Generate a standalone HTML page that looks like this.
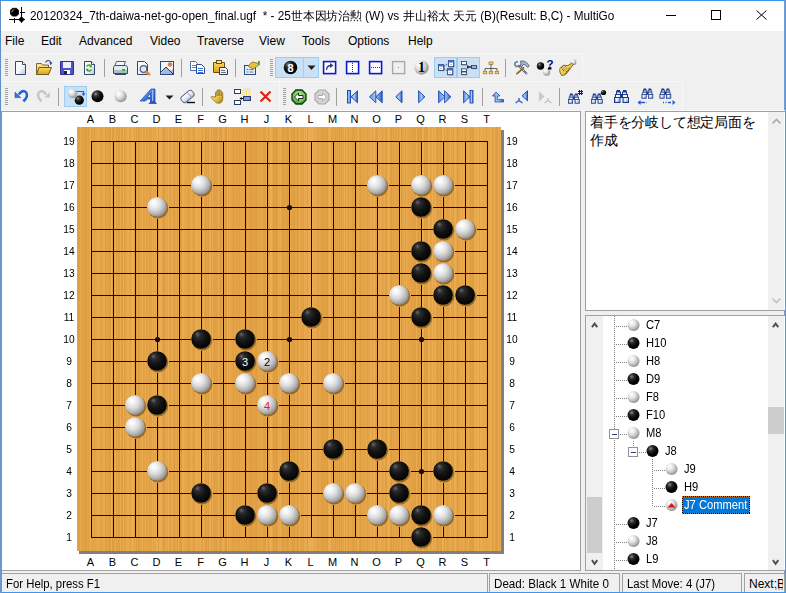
<!DOCTYPE html><html><head><meta charset="utf-8"><style>
*{margin:0;padding:0;box-sizing:border-box}
html,body{width:786px;height:593px;overflow:hidden;background:#f0f0f0;font-family:"Liberation Sans",sans-serif;color:#000}
.a{position:absolute}
.t{position:absolute;white-space:nowrap;line-height:1}
svg{position:absolute;overflow:visible}
</style></head><body>

<div class="a" style="left:0;top:0;width:786px;height:31px;background:#fff"></div>
<div class="a" style="left:0;top:0;width:786px;height:1px;background:#3a95ee"></div>
<div class="a" style="left:0;top:0;width:1px;height:593px;background:#5f8fc8"></div>
<div class="a" style="left:785px;top:0;width:1px;height:593px;background:#6394cc"></div>
<div class="a" style="left:784px;top:1px;width:1px;height:592px;background:#72a0d6"></div>
<div class="a" style="left:0;top:592px;width:786px;height:1px;background:#3a95ee"></div>
<svg style="left:9px;top:7px" width="17" height="17" viewBox="0 0 17 17">
<path d="M3.5 1.3h4l2 2v3.8l-2 2h-4l-2-2v-3.8z" fill="#000" stroke="#000" stroke-width="0.8"/>
<path d="M2.5 5l2.8-2.8" stroke="#fff" stroke-width="1" stroke-dasharray="1.2 0.5"/>
<path d="M12.5 0v16M11 5.5h5M0 12.5h16M5.5 11v5" stroke="#000" stroke-width="1"/>
<path d="M12.5 9.2l3.3 3.3-3.3 3.3-3.3-3.3z" fill="#000"/>
</svg>
<div class="t" style="left:30px;top:10px;font-size:12px;color:#000;transform:scaleX(0.985);transform-origin:0 0">20120324_7th-daiwa-net-go-open_final.ugf&nbsp; * - 25世本因坊治勲 (W) vs</div>
<div class="t" style="left:403px;top:10px;font-size:12px;color:#000;transform:scaleX(0.981);transform-origin:0 0">井山裕太 天元 (B)(Result: B,C) - MultiGo</div>
<svg style="left:666px;top:10px" width="102" height="10" viewBox="0 0 102 10">
<path d="M0 5.5h10" stroke="#000" stroke-width="1"/>
<rect x="45.5" y="0.5" width="9" height="9" fill="none" stroke="#000" stroke-width="1"/>
<path d="M90.5 0.5l10 9M100.5 0.5l-10 9" stroke="#000" stroke-width="1"/>
</svg>
<div class="t" style="left:5px;top:35px;font-size:12px">File</div>
<div class="t" style="left:41px;top:35px;font-size:12px">Edit</div>
<div class="t" style="left:79px;top:35px;font-size:12px">Advanced</div>
<div class="t" style="left:150px;top:35px;font-size:12px">Video</div>
<div class="t" style="left:197px;top:35px;font-size:12px">Traverse</div>
<div class="t" style="left:259px;top:35px;font-size:12px">View</div>
<div class="t" style="left:302px;top:35px;font-size:12px">Tools</div>
<div class="t" style="left:348px;top:35px;font-size:12px">Options</div>
<div class="t" style="left:408px;top:35px;font-size:12px">Help</div>
<div class="a" style="left:1px;top:53px;width:582px;height:1px;background:#f8f8f8"></div>
<div class="a" style="left:1px;top:81px;width:682px;height:1px;background:#f8f8f8"></div>
<div class="a" style="left:266px;top:53px;width:1px;height:28px;background:#f8f8f8"></div>
<div class="a" style="left:279px;top:81px;width:1px;height:29px;background:#f8f8f8"></div>
<div class="a" style="left:582px;top:53px;width:1px;height:28px;background:#f8f8f8"></div>
<div class="a" style="left:682px;top:81px;width:1px;height:29px;background:#f8f8f8"></div>
<div class="a" style="left:1px;top:110px;width:784px;height:1px;background:#f8f8f8"></div>
<svg style="left:0px;top:0px" width="1" height="1" viewBox="0 0 1 1" ><defs>
<radialGradient id="tw" cx="0.4" cy="0.38" r="0.66" fx="0.32" fy="0.26"><stop offset="0" stop-color="#ffffff"/><stop offset="0.2" stop-color="#f6f6f6"/><stop offset="0.5" stop-color="#dcdcdc"/><stop offset="0.78" stop-color="#b2b2b2"/><stop offset="1" stop-color="#858585"/></radialGradient>
<radialGradient id="tb" cx="0.35" cy="0.3" r="0.7"><stop offset="0" stop-color="#909090"/><stop offset="0.3" stop-color="#303030"/><stop offset="0.7" stop-color="#050505"/><stop offset="1" stop-color="#000"/></radialGradient>
<linearGradient id="doc" x1="0" y1="0" x2="1" y2="1"><stop offset="0" stop-color="#fff"/><stop offset="0.55" stop-color="#f4f6fa"/><stop offset="1" stop-color="#b4c0d8"/></linearGradient>
<linearGradient id="fold" x1="0" y1="0" x2="0" y2="1"><stop offset="0" stop-color="#fbe9a0"/><stop offset="1" stop-color="#e8b030"/></linearGradient>
<linearGradient id="fold2" x1="0" y1="0" x2="0" y2="1"><stop offset="0" stop-color="#fcd860"/><stop offset="1" stop-color="#e0a010"/></linearGradient>
<linearGradient id="nav" x1="0" y1="0" x2="1" y2="0"><stop offset="0" stop-color="#5a90e8"/><stop offset="0.5" stop-color="#a8ccf8"/><stop offset="1" stop-color="#2a5ac8"/></linearGradient><radialGradient id="grn" cx="0.5" cy="0.4" r="0.6"><stop offset="0" stop-color="#c8f0b0"/><stop offset="0.7" stop-color="#70c050"/><stop offset="1" stop-color="#309020"/></radialGradient>
<linearGradient id="bino" x1="0" y1="0" x2="0" y2="1"><stop offset="0" stop-color="#dfe8f8"/><stop offset="1" stop-color="#8aa4d8"/></linearGradient>
<linearGradient id="navA" x1="0" y1="0" x2="1" y2="1"><stop offset="0" stop-color="#9cc0f8"/><stop offset="0.5" stop-color="#3a78e0"/><stop offset="1" stop-color="#1a48b8"/></linearGradient><linearGradient id="eras" x1="0" y1="0" x2="0" y2="1"><stop offset="0" stop-color="#fff"/><stop offset="0.6" stop-color="#e4e8f2"/><stop offset="1" stop-color="#a8b4cc"/></linearGradient><linearGradient id="gold" x1="0" y1="0" x2="1" y2="1"><stop offset="0" stop-color="#fff0a0"/><stop offset="0.6" stop-color="#e8c040"/><stop offset="1" stop-color="#a07810"/></linearGradient>
</defs></svg>
<svg style="left:5px;top:59px" width="3" height="18" viewBox="0 0 3 18" shape-rendering="crispEdges"><rect x="0" y="0" width="3" height="1" fill="#a0a0a0"/><rect x="0" y="2" width="3" height="1" fill="#a0a0a0"/><rect x="0" y="4" width="3" height="1" fill="#a0a0a0"/><rect x="0" y="6" width="3" height="1" fill="#a0a0a0"/><rect x="0" y="8" width="3" height="1" fill="#a0a0a0"/><rect x="0" y="10" width="3" height="1" fill="#a0a0a0"/><rect x="0" y="12" width="3" height="1" fill="#a0a0a0"/><rect x="0" y="14" width="3" height="1" fill="#a0a0a0"/><rect x="0" y="16" width="3" height="1" fill="#a0a0a0"/></svg>
<svg style="left:14px;top:60px" width="13" height="16" viewBox="0 0 13 16" ><path d="M1.5 1.5h7l3 3v10h-10z" fill="url(#doc)" stroke="#33486a" stroke-width="1" stroke-linejoin="miter"/><path d="M8.5 1.5v3h3" fill="#fff" stroke="#33486a" stroke-width="1"/></svg>
<svg style="left:35px;top:59px" width="18" height="17" viewBox="0 0 18 17" ><path d="M1.5 4.5h5l1 1.5h6v9.5h-12z" fill="url(#fold)" stroke="#7a6a40" stroke-width="1"/><path d="M4 8.5h12.5l-3 7h-12z" fill="url(#fold2)" stroke="#6a5a30" stroke-width="1"/><path d="M10.5 3.5c1.5-2.8 4.5-2.8 5.5 0.5" fill="none" stroke="#2a4a8a" stroke-width="1.1"/><path d="M14.2 3.6h3.3l-1.8 2.6z" fill="#2a4a8a"/></svg>
<svg style="left:59px;top:60px" width="16" height="16" viewBox="0 0 16 16" ><path d="M1.5 1.5h13v13h-13z" fill="#5252c8" stroke="#30308a" stroke-width="1"/><rect x="4" y="2" width="8" height="6" fill="#eef0fa"/><rect x="5" y="10" width="6" height="4" fill="#fff"/><rect x="5" y="11" width="3" height="3" fill="#202040"/></svg>
<svg style="left:83px;top:60px" width="13" height="16" viewBox="0 0 13 16" ><path d="M1.5 1.5h7l3 3v10h-10z" fill="url(#doc)" stroke="#33486a" stroke-width="1" stroke-linejoin="miter"/><path d="M8.5 1.5v3h3" fill="#fff" stroke="#33486a" stroke-width="1"/><path d="M3.5 6.5c1-2 4-2 5 0M8.5 9.5c-1 2-4 2-5 0" fill="none" stroke="#40a020" stroke-width="1.4"/><path d="M7 4.5l2.5 2.5-3 .5z M5 11.5l-2.5-2.5 3-.5z" fill="#40a020"/></svg>
<div class="a" style="left:104px;top:59px;width:1px;height:18px;background:#a0a0a0"></div>
<svg style="left:112px;top:60px" width="17" height="16" viewBox="0 0 17 16" ><path d="M4.5 1.5h9l-2 5h-9z" fill="#f4f6fa" stroke="#50607a" stroke-width="1"/><path d="M1.5 7.5c0-1 1-2 2-2h10c1 0 2 1 2 2v6h-14z" fill="#e4e8f0" stroke="#3a4a66" stroke-width="1"/><rect x="2" y="10" width="13" height="3" fill="#b0bcd0"/><rect x="10" y="9" width="3" height="2" fill="#20c020"/><path d="M3 14.5h11" stroke="#3a4a66"/></svg>
<svg style="left:136px;top:60px" width="17" height="17" viewBox="0 0 17 17" ><path d="M1.5 1.5h7l3 3v10h-10z" fill="url(#doc)" stroke="#33486a" stroke-width="1"/><circle cx="7.5" cy="9" r="3.3" fill="#dfe8f4" stroke="#50607a" stroke-width="1.2"/><path d="M10 11.5l4 3.5" stroke="#e89020" stroke-width="2.4"/></svg>
<svg style="left:159px;top:60px" width="16" height="16" viewBox="0 0 16 16" ><rect x="1.5" y="1.5" width="13" height="13" fill="#f4f6fa" stroke="#2c4a80" stroke-width="1"/><path d="M2 13l5-6 4 4 3-2v5h-12z" fill="#a8b8d8"/><path d="M2 12l5-5 7 7" fill="none" stroke="#303a50" stroke-width="1"/><circle cx="11" cy="4.5" r="1.8" fill="#f08040" stroke="#c05020" stroke-width=".6"/></svg>
<div class="a" style="left:181px;top:59px;width:1px;height:18px;background:#a0a0a0"></div>
<svg style="left:189px;top:60px" width="17" height="15" viewBox="0 0 17 15" ><path d="M1.5 1.5h5l2 2v7h-7z" fill="#fff" stroke="#4a6aa8" stroke-width="1"/><g shape-rendering="crispEdges"><rect x="3" y="5" width="4" height="1" fill="#4a80e0"/><rect x="3" y="7" width="4" height="1" fill="#4a80e0"/></g><path d="M7.5 4.5h5l3 3v6h-8z" fill="#fff" stroke="#2a4a98" stroke-width="1"/><g shape-rendering="crispEdges"><rect x="9" y="8" width="5" height="1" fill="#3a70d8"/><rect x="9" y="10" width="5" height="1" fill="#3a70d8"/><rect x="9" y="12" width="5" height="1" fill="#3a70d8"/></g></svg>
<svg style="left:212px;top:60px" width="18" height="16" viewBox="0 0 18 16" ><path d="M1.5 2.5h11v10h-11z" fill="url(#fold2)" stroke="#6a5010" stroke-width="1"/><rect x="4.5" y="0.5" width="5" height="3" fill="#f8e890" stroke="#6a5010" stroke-width="1"/><path d="M7.5 7.5h6l2 2v5h-8z" fill="#eef0f4" stroke="#3a3a3a" stroke-width="1"/><g shape-rendering="crispEdges"><rect x="9" y="10" width="4" height="1" fill="#6a7490"/><rect x="9" y="12" width="5" height="1" fill="#6a7490"/></g></svg>
<div class="a" style="left:235px;top:59px;width:1px;height:18px;background:#a0a0a0"></div>
<svg style="left:243px;top:60px" width="18" height="16" viewBox="0 0 18 16" ><rect x="1.5" y="5.5" width="11" height="9" fill="#e4ecf8" stroke="#2a4a80" stroke-width="1"/><path d="M3.5 9.5h2M6.5 9.5h4M3.5 12h2M6.5 12h4" stroke="#5a7ab0"/><path d="M5 6l4-4 5 1 2 2-6 4z" fill="#e8c040" stroke="#8a6a10" stroke-width=".8"/><rect x="15" y="1" width="2" height="4" fill="#40b040"/></svg>
<svg style="left:270px;top:59px" width="3" height="18" viewBox="0 0 3 18" shape-rendering="crispEdges"><rect x="0" y="0" width="3" height="1" fill="#a0a0a0"/><rect x="0" y="2" width="3" height="1" fill="#a0a0a0"/><rect x="0" y="4" width="3" height="1" fill="#a0a0a0"/><rect x="0" y="6" width="3" height="1" fill="#a0a0a0"/><rect x="0" y="8" width="3" height="1" fill="#a0a0a0"/><rect x="0" y="10" width="3" height="1" fill="#a0a0a0"/><rect x="0" y="12" width="3" height="1" fill="#a0a0a0"/><rect x="0" y="14" width="3" height="1" fill="#a0a0a0"/><rect x="0" y="16" width="3" height="1" fill="#a0a0a0"/></svg>
<div class="a" style="left:275px;top:57px;width:44px;height:21px;background:#c9e0f5;border:1px solid #99cdf5"></div>
<div class="a" style="left:303px;top:58px;width:1px;height:19px;background:#99d1ff"></div>
<svg style="left:283px;top:60px" width="15" height="15" viewBox="0 0 15 15" ><circle cx="7.5" cy="7.5" r="6.8" fill="url(#tb)"/><text x="7.5" y="11.6" text-anchor="middle" font-family="Liberation Sans" font-weight="bold" font-size="11" fill="#fff">8</text></svg>
<svg style="left:307px;top:65px" width="9" height="5" viewBox="0 0 9 5" ><path d="M0.5 0.5h8l-4 4.5z" fill="#202020"/></svg>
<svg style="left:322px;top:60px" width="15" height="15" viewBox="0 0 15 15" ><rect x="1.6" y="1.6" width="12" height="12" fill="#fff" stroke="#0a1ad0" stroke-width="1.6"/><path d="M4.5 10c0-3 2-4.5 5-4.5" fill="none" stroke="#303a80" stroke-width="1.3"/><path d="M8 3l3.5 2.5-3.5 2.5z" fill="#303a80"/></svg>
<svg style="left:345px;top:60px" width="15" height="15" viewBox="0 0 15 15" ><rect x="1.6" y="1.6" width="12" height="12" fill="#fff" stroke="#0a1ad0" stroke-width="1.6"/><path d="M7.5 3v9" stroke="#303060" stroke-width="1" stroke-dasharray="1 1"/></svg>
<svg style="left:368px;top:60px" width="15" height="15" viewBox="0 0 15 15" ><rect x="1.6" y="1.6" width="12" height="12" fill="#fff" stroke="#0a1ad0" stroke-width="1.6"/><path d="M3 7.5h9" stroke="#303060" stroke-width="1" stroke-dasharray="1 1"/></svg>
<svg style="left:391px;top:60px" width="15" height="15" viewBox="0 0 15 15" ><rect x="1.6" y="1.6" width="12" height="12" fill="#f0f0f0" stroke="#a8a8a8" stroke-width="1.4"/><rect x="7" y="7" width="1" height="1" fill="#808080"/></svg>
<svg style="left:414px;top:60px" width="15" height="15" viewBox="0 0 15 15" ><circle cx="7.5" cy="7.5" r="7.2" fill="url(#tw)"/><text x="7.5" y="12.3" text-anchor="middle" font-family="Liberation Serif" font-weight="bold" font-size="14" fill="#000">1</text></svg>
<div class="a" style="left:434px;top:57px;width:23px;height:21px;background:#c9e0f5;border:1px solid #99cdf5"></div>
<div class="a" style="left:457px;top:57px;width:23px;height:21px;background:#c9e0f5;border:1px solid #99cdf5"></div>
<svg style="left:434px;top:56px" width="23" height="21" viewBox="0 0 23 21" ><rect x="5.1" y="9.1" width="5.2" height="6" fill="#1a2a4a" opacity=".6"/><rect x="4.5" y="8.5" width="5.2" height="6" fill="#fff" stroke="#2a3a6a" stroke-width=".8"/><rect x="4.5" y="8.5" width="5.2" height="2" fill="#3a70d8"/><rect x="6.5" y="12.0" width="1.2000000000000002" height="1" fill="#9aa8c0"/><rect x="15.1" y="5.1" width="5.2" height="6.2" fill="#1a2a4a" opacity=".6"/><rect x="14.5" y="4.5" width="5.2" height="6.2" fill="#fff" stroke="#2a3a6a" stroke-width=".8"/><rect x="14.5" y="4.5" width="5.2" height="2" fill="#3a70d8"/><rect x="16.5" y="8.0" width="1.2000000000000002" height="1" fill="#9aa8c0"/><rect x="14.1" y="13.1" width="5.2" height="6.2" fill="#1a2a4a" opacity=".6"/><rect x="13.5" y="12.5" width="5.2" height="6.2" fill="#fff" stroke="#2a3a6a" stroke-width=".8"/><rect x="13.5" y="12.5" width="5.2" height="2" fill="#3a70d8"/><rect x="15.5" y="16.0" width="1.2000000000000002" height="1" fill="#9aa8c0"/><path d="M9.8 10.5l4.5-3M9.8 12.5l3.7 2.5" stroke="#2a3a6a" stroke-width=".9" stroke-dasharray="1.5 .8"/></svg>
<svg style="left:457px;top:56px" width="23" height="21" viewBox="0 0 23 21" ><rect x="5.1" y="6.1" width="5" height="3.2" fill="#1a2a4a" opacity=".55"/><rect x="4.5" y="5.5" width="5" height="3.2" fill="#fff" stroke="#2a3a5a" stroke-width=".8"/><rect x="5.1" y="13.4" width="5" height="2.5" fill="#1a2a4a" opacity=".55"/><rect x="4.5" y="12.8" width="5" height="2.5" fill="#fff" stroke="#2a3a5a" stroke-width=".8"/><rect x="5.1" y="16.6" width="5" height="2.6" fill="#1a2a4a" opacity=".55"/><rect x="4.5" y="16" width="5" height="2.6" fill="#fff" stroke="#2a3a5a" stroke-width=".8"/><rect x="15.1" y="10.1" width="5" height="3" fill="#1a2a4a" opacity=".55"/><rect x="14.5" y="9.5" width="5" height="3" fill="#90b8f0" stroke="#2a3a5a" stroke-width=".8"/><path d="M10.5 11h4" stroke="#000" stroke-width="1.2"/><path d="M10.8 9.5v3" stroke="#000" stroke-width="1.2"/></svg>
<svg style="left:482px;top:60px" width="18" height="15" viewBox="0 0 18 15" ><rect x="7" y="2" width="4" height="2.5" fill="#f0d060" stroke="#9a7a30" stroke-width=".7"/><path d="M9 4.5v3.5M3 8.5h12M3 8.5v2.5M9 8.5v2.5M15 8.5v2.5" stroke="#404040" stroke-width=".8"/><rect x="1.3" y="11.3" width="3.5" height="2.5" fill="#f0d060" stroke="#9a7a30" stroke-width=".7"/><rect x="7.2" y="11.3" width="3.5" height="2.5" fill="#f0d060" stroke="#9a7a30" stroke-width=".7"/><rect x="13.2" y="11.3" width="3.5" height="2.5" fill="#f0d060" stroke="#9a7a30" stroke-width=".7"/></svg>
<div class="a" style="left:505px;top:59px;width:1px;height:18px;background:#a0a0a0"></div>
<svg style="left:513px;top:60px" width="18" height="16" viewBox="0 0 18 16" ><path d="M5.5 5.5l8.5 8.5" stroke="#4a5878" stroke-width="2"/><path d="M5.5 5.5l8.5 8.5" stroke="#e8eef8" stroke-width="1" stroke-dasharray="1 1.2"/><path d="M5 2a2.3 2.3 0 1 0 1.2 3" fill="none" stroke="#6a7a98" stroke-width="1.7"/><path d="M11 7.5l-7.5 6.5" stroke="#c88a20" stroke-width="2.2"/><path d="M11 7.5l-7.5 6.5" stroke="#201000" stroke-width="1" stroke-dasharray="1 1.3"/><path d="M7.5 1.2c3.5-.8 6.5.5 8.8 4.8l-1.6 1.5c-1.6-2.4-3.4-3.2-4.6-3l-1.4 2.5-1.4-1.2 0.6-2.2z" fill="#a4b4cc" stroke="#52627e" stroke-width=".9"/></svg>
<svg style="left:536px;top:59px" width="18" height="17" viewBox="0 0 18 17" ><circle cx="4.5" cy="7" r="3.7" fill="url(#tb)"/><circle cx="10.5" cy="13" r="3.7" fill="url(#tw)"/><text x="14" y="8.5" text-anchor="middle" font-family="Liberation Sans" font-weight="bold" font-size="11.5" fill="#0a0a80">?</text><rect x="12" y="8.5" width="3.5" height="2" fill="#000"/></svg>
<svg style="left:559px;top:59px" width="18" height="18" viewBox="0 0 18 18" ><circle cx="14.4" cy="3.2" r="2.9" fill="url(#tw)"/><path d="M0.8 9.5l3.5-3.2 4.5 0.3 3.8-2.3 1.6 1.2-3.2 4.5-4.8 5.8-3.6 0.8-1.8-3.6z" fill="url(#gold)" stroke="#6a5010" stroke-width=".8"/><path d="M2 9l3-2.5M3 10.5l3.5-3M4 12l3.5-3M7 13l4-4.5M6.5 15l4-4.5" stroke="#3a2a08" stroke-width=".9" stroke-dasharray="1 1"/></svg>
<svg style="left:5px;top:88px" width="3" height="18" viewBox="0 0 3 18" shape-rendering="crispEdges"><rect x="0" y="0" width="3" height="1" fill="#a0a0a0"/><rect x="0" y="2" width="3" height="1" fill="#a0a0a0"/><rect x="0" y="4" width="3" height="1" fill="#a0a0a0"/><rect x="0" y="6" width="3" height="1" fill="#a0a0a0"/><rect x="0" y="8" width="3" height="1" fill="#a0a0a0"/><rect x="0" y="10" width="3" height="1" fill="#a0a0a0"/><rect x="0" y="12" width="3" height="1" fill="#a0a0a0"/><rect x="0" y="14" width="3" height="1" fill="#a0a0a0"/><rect x="0" y="16" width="3" height="1" fill="#a0a0a0"/></svg>
<svg style="left:14px;top:89px" width="14" height="14" viewBox="0 0 14 14" ><path d="M4.8 5.6C6.2 3 8.8 1.6 10.8 2.4c2.6 1.2 2.8 5 0.8 7.4l-2.2 2.6" fill="none" stroke="#2a62d0" stroke-width="2.6"/><path d="M1 3.2v5.4h5.8z" fill="#3a72e0" stroke="#1a48b8" stroke-width=".6"/></svg>
<svg style="left:37px;top:89px" width="14" height="14" viewBox="0 0 14 14" ><g transform="translate(14,0) scale(-1,1)"><path d="M4.8 5.6C6.2 3 8.8 1.6 10.8 2.4c2.6 1.2 2.8 5 0.8 7.4l-2.2 2.6" fill="none" stroke="#c8c8c8" stroke-width="2.6"/><path d="M1 3.2v5.4h5.8z" fill="#c8c8c8"/></g></svg>
<div class="a" style="left:58px;top:88px;width:1px;height:18px;background:#a0a0a0"></div>
<div class="a" style="left:64px;top:86px;width:23px;height:21px;background:#c9e0f5;border:1px solid #99cdf5"></div>
<svg style="left:66px;top:88px" width="20" height="17" viewBox="0 0 20 17" ><circle cx="6.5" cy="5.5" r="4.6" fill="url(#tw)"/><circle cx="13.3" cy="12.2" r="4.6" fill="url(#tb)"/><path d="M10.5 3.5h7v3" fill="none" stroke="#2a5ad0" stroke-width="1.2"/><path d="M15.5 5.5h4l-2 2.5z" fill="#2a5ad0"/></svg>
<svg style="left:91px;top:90px" width="14" height="14" viewBox="0 0 14 14" ><circle cx="6.5" cy="6.3" r="6" fill="url(#tb)"/></svg>
<svg style="left:114px;top:90px" width="14" height="14" viewBox="0 0 14 14" ><circle cx="6.6" cy="6.3" r="6" fill="url(#tw)"/></svg>
<svg style="left:139px;top:88px" width="18" height="17" viewBox="0 0 18 17" ><path fill-rule="evenodd" d="M12 1h4v13l1.5 1.5h-7.5l1.5-1.5v-3h-3.5l-1.5 2h-5.5l1.5-1.5z M11.5 5l-3.2 4.5h3.2z" fill="url(#navA)" stroke="#1a40b0" stroke-width=".7"/><rect x="13" y="2" width="1.3" height="11" fill="#b8d0f8" opacity=".8"/></svg>
<svg style="left:165px;top:95px" width="9" height="5" viewBox="0 0 9 5" ><path d="M0.5 0.5h8l-4 4z" fill="#202020"/></svg>
<svg style="left:180px;top:90px" width="16" height="14" viewBox="0 0 16 14" ><g transform="rotate(-40 7.5 6.5)"><rect x="0.5" y="3" width="14" height="7" rx="2.5" fill="url(#eras)" stroke="#5a6a88" stroke-width="1"/><path d="M10 3.2v6.6" stroke="#7a8aa8" stroke-width=".8"/></g><path d="M7 12.5h8" stroke="#101010" stroke-width="1.4"/></svg>
<div class="a" style="left:202px;top:88px;width:1px;height:18px;background:#a0a0a0"></div>
<svg style="left:211px;top:89px" width="15" height="15" viewBox="0 0 15 15" ><path d="M4.5 8V3.5c0-.9 1.4-.9 1.4 0V7V1.8c0-.9 1.5-.9 1.5 0V7V1.3c0-.9 1.5-.9 1.5 0V7V2.3c0-.9 1.5-.9 1.5 0V7V4c0-.9 1.4-.9 1.4 0v5.5c0 2.8-1.6 4.8-4.2 4.8c-1.8 0-3-.8-4-2.2l-3.3-3.4c-.6-.6 0-1.5.9-1.1z" fill="url(#gold)" stroke="#7a5a10" stroke-width=".7"/><path d="M6 3v4M7.7 2v5M9.4 2.3v4.7M11 3.5v3.5" stroke="#fff6c0" stroke-width=".5" opacity=".7"/></svg>
<svg style="left:233px;top:88px" width="18" height="18" viewBox="0 0 18 18" ><rect x="1.5" y="1.5" width="6" height="4" fill="#fff" stroke="#2a3a6a"/><rect x="1.5" y="12.5" width="6" height="4" fill="#fff" stroke="#2a3a6a"/><rect x="10.5" y="8.5" width="7" height="4" fill="#70a0f0" stroke="#2a3a6a"/><path d="M7 10.5h3.5" stroke="#000"/><path d="M6.5 10.5l2.2-1.5v3z" fill="#000"/><rect x="10" y="1" width="7" height="6" fill="none" stroke="#f0d040" stroke-dasharray="1 1"/><path d="M11 4h5M13.5 1.5v5" stroke="#f8e070"/></svg>
<svg style="left:259px;top:90px" width="13" height="13" viewBox="0 0 13 13" ><path d="M1.5 1.5l10 10M11.5 1.5l-10 10" stroke="#e02010" stroke-width="2.2"/></svg>
<svg style="left:283px;top:88px" width="3" height="18" viewBox="0 0 3 18" shape-rendering="crispEdges"><rect x="0" y="0" width="3" height="1" fill="#a0a0a0"/><rect x="0" y="2" width="3" height="1" fill="#a0a0a0"/><rect x="0" y="4" width="3" height="1" fill="#a0a0a0"/><rect x="0" y="6" width="3" height="1" fill="#a0a0a0"/><rect x="0" y="8" width="3" height="1" fill="#a0a0a0"/><rect x="0" y="10" width="3" height="1" fill="#a0a0a0"/><rect x="0" y="12" width="3" height="1" fill="#a0a0a0"/><rect x="0" y="14" width="3" height="1" fill="#a0a0a0"/><rect x="0" y="16" width="3" height="1" fill="#a0a0a0"/></svg>
<svg style="left:291px;top:89px" width="16" height="16" viewBox="0 0 16 16" ><path d="M5 1h6l4 4v6l-4 4h-6l-4-4v-6z" fill="url(#grn)" stroke="#103a10" stroke-width="1.3"/><path d="M3.5 8l4-4v2.5h4.5v3h-4.5v2.5z" fill="#fff" stroke="#101010" stroke-width=".9"/></svg>
<svg style="left:314px;top:89px" width="16" height="16" viewBox="0 0 16 16" ><path d="M5 1h6l4 4v6l-4 4h-6l-4-4v-6z" fill="#d4d4d4" stroke="#a8a8a8" stroke-width="1.2"/><path d="M12.5 8l-4-4v2.5h-4.5v3h4.5v2.5z" fill="#fff" stroke="#9a9a9a" stroke-width=".8"/></svg>
<div class="a" style="left:336px;top:88px;width:1px;height:18px;background:#a0a0a0"></div>
<svg style="left:347px;top:90px" width="11" height="14" viewBox="0 0 11 14" ><rect x="0.5" y="0.5" width="3" height="12.5" fill="url(#nav)" stroke="#1a44b0" stroke-width=".9"/><path d="M10.5 0.8v12l-6.5-6z" fill="url(#nav)" stroke="#1a44b0" stroke-width=".9"/></svg>
<svg style="left:369px;top:90px" width="14" height="14" viewBox="0 0 14 14" ><path d="M6.8 0.8v12l-6.3-6z M13.2 0.8v12l-6.3-6z" fill="url(#nav)" stroke="#1a44b0" stroke-width=".9"/></svg>
<svg style="left:395px;top:90px" width="8" height="14" viewBox="0 0 8 14" ><path d="M7 0.8v12l-6.3-6z" fill="url(#nav)" stroke="#1a44b0" stroke-width=".9"/></svg>
<svg style="left:418px;top:90px" width="8" height="14" viewBox="0 0 8 14" ><path d="M0.6 0.8v12l6.3-6z" fill="url(#nav)" stroke="#1a44b0" stroke-width=".9"/></svg>
<svg style="left:438px;top:90px" width="14" height="14" viewBox="0 0 14 14" ><path d="M0.6 0.8v12l6.3-6z M6.6 0.8v12l6.3-6z" fill="url(#nav)" stroke="#1a44b0" stroke-width=".9"/></svg>
<svg style="left:463px;top:90px" width="11" height="14" viewBox="0 0 11 14" ><path d="M0.6 0.8v12l6.3-6z" fill="url(#nav)" stroke="#1a44b0" stroke-width=".9"/><rect x="7" y="0.5" width="3" height="12.5" fill="url(#nav)" stroke="#1a44b0" stroke-width=".9"/></svg>
<div class="a" style="left:482px;top:88px;width:1px;height:18px;background:#a0a0a0"></div>
<svg style="left:492px;top:91px" width="13" height="12" viewBox="0 0 13 12" ><path d="M4 1l4 4h-2.5v3.5h6v2.5h-8.5v-6h-2.5z" fill="url(#nav)" stroke="#1a40a0" stroke-width=".7"/></svg>
<svg style="left:514px;top:90px" width="15" height="14" viewBox="0 0 15 14" ><path d="M13.5 0.8v10l-5.5-5z" fill="url(#nav)" stroke="#1a44b0" stroke-width=".9"/><path d="M5 8v2.5l-3.5 2.5M5 10.5l3.5 2.5" fill="none" stroke="#2a60d0" stroke-width="1.4"/></svg>
<svg style="left:538px;top:90px" width="15" height="14" viewBox="0 0 15 14" ><path d="M1 1.5v10l5.5-5z" fill="#c8c8c8"/><path d="M10 8v2.5l-3.5 2.5M10 10.5l3.5 2.5" fill="none" stroke="#c4c4c4" stroke-width="1.4"/></svg>
<div class="a" style="left:559px;top:88px;width:1px;height:18px;background:#a0a0a0"></div>
<svg style="left:567px;top:89px" width="17" height="16" viewBox="0 0 17 16" ><g transform="translate(1,4.5) scale(0.78)"><rect x="6" y="4" width="3" height="4" fill="#1a3a88"/><rect x="0.5" y="7.5" width="5.5" height="5" fill="url(#bino)" stroke="#1a3a88"/><rect x="9" y="7.5" width="5.5" height="5" fill="url(#bino)" stroke="#1a3a88"/><rect x="1.5" y="4.5" width="5" height="3" fill="#f4f8ff" stroke="#1a3a88"/><rect x="8.5" y="4.5" width="5" height="3" fill="#f4f8ff" stroke="#1a3a88"/><rect x="2.5" y="2" width="4" height="2.5" fill="#e8eefa" stroke="#1a3a88"/><rect x="8.5" y="2" width="4" height="2.5" fill="#e8eefa" stroke="#1a3a88"/><rect x="2.5" y="0" width="3.5" height="2" fill="#1a3a88"/><rect x="9" y="0" width="3.5" height="2" fill="#1a3a88"/><rect x="2" y="8.5" width="1.5" height="3" fill="#fff"/><rect x="10.5" y="8.5" width="1.5" height="3" fill="#fff"/></g><path d="M12.5 1v5M14.5 1v5M11 2.5h5M11 4.5h5" stroke="#0a1a90" stroke-width="1.1"/></svg>
<svg style="left:590px;top:89px" width="17" height="16" viewBox="0 0 17 16" ><g transform="translate(1,4.5) scale(0.78)"><rect x="6" y="4" width="3" height="4" fill="#1a3a88"/><rect x="0.5" y="7.5" width="5.5" height="5" fill="url(#bino)" stroke="#1a3a88"/><rect x="9" y="7.5" width="5.5" height="5" fill="url(#bino)" stroke="#1a3a88"/><rect x="1.5" y="4.5" width="5" height="3" fill="#f4f8ff" stroke="#1a3a88"/><rect x="8.5" y="4.5" width="5" height="3" fill="#f4f8ff" stroke="#1a3a88"/><rect x="2.5" y="2" width="4" height="2.5" fill="#e8eefa" stroke="#1a3a88"/><rect x="8.5" y="2" width="4" height="2.5" fill="#e8eefa" stroke="#1a3a88"/><rect x="2.5" y="0" width="3.5" height="2" fill="#1a3a88"/><rect x="9" y="0" width="3.5" height="2" fill="#1a3a88"/><rect x="2" y="8.5" width="1.5" height="3" fill="#fff"/><rect x="10.5" y="8.5" width="1.5" height="3" fill="#fff"/></g><circle cx="13.5" cy="3.5" r="2.6" fill="url(#tb)"/></svg>
<svg style="left:613px;top:89px" width="17" height="15" viewBox="0 0 17 15" ><g transform="translate(1,1) scale(1)"><rect x="6" y="4" width="3" height="4" fill="#1a3a88"/><rect x="0.5" y="7.5" width="5.5" height="5" fill="url(#bino)" stroke="#1a3a88"/><rect x="9" y="7.5" width="5.5" height="5" fill="url(#bino)" stroke="#1a3a88"/><rect x="1.5" y="4.5" width="5" height="3" fill="#f4f8ff" stroke="#1a3a88"/><rect x="8.5" y="4.5" width="5" height="3" fill="#f4f8ff" stroke="#1a3a88"/><rect x="2.5" y="2" width="4" height="2.5" fill="#e8eefa" stroke="#1a3a88"/><rect x="8.5" y="2" width="4" height="2.5" fill="#e8eefa" stroke="#1a3a88"/><rect x="2.5" y="0" width="3.5" height="2" fill="#1a3a88"/><rect x="9" y="0" width="3.5" height="2" fill="#1a3a88"/><rect x="2" y="8.5" width="1.5" height="3" fill="#fff"/><rect x="10.5" y="8.5" width="1.5" height="3" fill="#fff"/></g></svg>
<svg style="left:637px;top:88px" width="17" height="18" viewBox="0 0 17 18" ><g transform="translate(4.5,0.5) scale(0.78)"><rect x="6" y="4" width="3" height="4" fill="#1a3a88"/><rect x="0.5" y="7.5" width="5.5" height="5" fill="url(#bino)" stroke="#1a3a88"/><rect x="9" y="7.5" width="5.5" height="5" fill="url(#bino)" stroke="#1a3a88"/><rect x="1.5" y="4.5" width="5" height="3" fill="#f4f8ff" stroke="#1a3a88"/><rect x="8.5" y="4.5" width="5" height="3" fill="#f4f8ff" stroke="#1a3a88"/><rect x="2.5" y="2" width="4" height="2.5" fill="#e8eefa" stroke="#1a3a88"/><rect x="8.5" y="2" width="4" height="2.5" fill="#e8eefa" stroke="#1a3a88"/><rect x="2.5" y="0" width="3.5" height="2" fill="#1a3a88"/><rect x="9" y="0" width="3.5" height="2" fill="#1a3a88"/><rect x="2" y="8.5" width="1.5" height="3" fill="#fff"/><rect x="10.5" y="8.5" width="1.5" height="3" fill="#fff"/></g><path d="M2 14.5h8" stroke="#2a58c8" stroke-width="1.4" stroke-dasharray="6 1.5 1 1.5"/><path d="M0.5 14.5l3-2.5v5z" fill="#2a58c8"/></svg>
<svg style="left:659px;top:88px" width="17" height="18" viewBox="0 0 17 18" ><g transform="translate(0.5,0.5) scale(0.78)"><rect x="6" y="4" width="3" height="4" fill="#1a3a88"/><rect x="0.5" y="7.5" width="5.5" height="5" fill="url(#bino)" stroke="#1a3a88"/><rect x="9" y="7.5" width="5.5" height="5" fill="url(#bino)" stroke="#1a3a88"/><rect x="1.5" y="4.5" width="5" height="3" fill="#f4f8ff" stroke="#1a3a88"/><rect x="8.5" y="4.5" width="5" height="3" fill="#f4f8ff" stroke="#1a3a88"/><rect x="2.5" y="2" width="4" height="2.5" fill="#e8eefa" stroke="#1a3a88"/><rect x="8.5" y="2" width="4" height="2.5" fill="#e8eefa" stroke="#1a3a88"/><rect x="2.5" y="0" width="3.5" height="2" fill="#1a3a88"/><rect x="9" y="0" width="3.5" height="2" fill="#1a3a88"/><rect x="2" y="8.5" width="1.5" height="3" fill="#fff"/><rect x="10.5" y="8.5" width="1.5" height="3" fill="#fff"/></g><path d="M4 14.5h8" stroke="#2a58c8" stroke-width="1.4" stroke-dasharray="1 1.5 1 1.5 6"/><path d="M16.5 14.5l-3-2.5v5z" fill="#2a58c8"/></svg>
<div class="a" style="left:1px;top:111px;width:580px;height:460px;background:#fff;border:1px solid #a0a0a0;border-right-color:#a0a0a0"></div>
<div class="a" style="left:585px;top:111px;width:200px;height:200px;background:#fff;border:1px solid #a0a0a0;border-right:none"></div>
<div class="a" style="left:768px;top:112px;width:16px;height:198px;background:#f0f0f0"></div>
<svg style="left:772px;top:118px" width="9" height="6" viewBox="0 0 9 6"><path d="M0.5 5.5L4.5 1.5 8.5 5.5" fill="none" stroke="#a8a8a8" stroke-width="1.6"/></svg>
<svg style="left:772px;top:298px" width="9" height="6" viewBox="0 0 9 6"><path d="M0.5 0.5L4.5 4.5 8.5 0.5" fill="none" stroke="#c0c0c0" stroke-width="1.6"/></svg>
<div class="t" style="left:590px;top:114px;font-size:13.5px;line-height:18px;letter-spacing:-0.2px;width:175px;white-space:normal">着手を分岐して想定局面を<br>作成</div>
<div class="a" style="left:585px;top:315px;width:200px;height:256px;background:#fff;border:1px solid #a0a0a0;border-right:none"></div>
<div class="a" style="left:586px;top:316px;width:17px;height:254px;background:#f0f0f0"></div>
<div class="a" style="left:587px;top:497px;width:15px;height:56px;background:#cdcdcd"></div>
<svg style="left:591px;top:321px" width="8" height="8" viewBox="0 0 8 8" ><path d="M0.9 6.2L3.6 2.6 6.3 6.2" fill="none" stroke="#505050" stroke-width="2"/></svg>
<svg style="left:591px;top:559px" width="8" height="8" viewBox="0 0 8 8" ><path d="M0.9 1.2L3.6 4.8 6.3 1.2" fill="none" stroke="#505050" stroke-width="2"/></svg>
<div class="a" style="left:768px;top:316px;width:16px;height:254px;background:#f0f0f0"></div>
<svg style="left:580px;top:316px" width="188" height="254" viewBox="0 0 188 254" shape-rendering="auto"><defs><radialGradient id="rw" cx="0.4" cy="0.38" r="0.66" fx="0.32" fy="0.26"><stop offset="0" stop-color="#ffffff"/><stop offset="0.2" stop-color="#f6f6f6"/><stop offset="0.5" stop-color="#dcdcdc"/><stop offset="0.78" stop-color="#b2b2b2"/><stop offset="1" stop-color="#858585"/></radialGradient><radialGradient id="rb" cx="0.35" cy="0.3" r="0.7"><stop offset="0" stop-color="#8a8a8a"/><stop offset="0.3" stop-color="#2a2a2a"/><stop offset="0.7" stop-color="#050505"/><stop offset="1" stop-color="#000"/></radialGradient></defs><rect x="34" y="0" width="1" height="1" fill="#808080"/><rect x="34" y="2" width="1" height="1" fill="#808080"/><rect x="34" y="4" width="1" height="1" fill="#808080"/><rect x="34" y="6" width="1" height="1" fill="#808080"/><rect x="34" y="8" width="1" height="1" fill="#808080"/><rect x="34" y="10" width="1" height="1" fill="#808080"/><rect x="34" y="12" width="1" height="1" fill="#808080"/><rect x="34" y="14" width="1" height="1" fill="#808080"/><rect x="34" y="16" width="1" height="1" fill="#808080"/><rect x="34" y="18" width="1" height="1" fill="#808080"/><rect x="34" y="20" width="1" height="1" fill="#808080"/><rect x="34" y="22" width="1" height="1" fill="#808080"/><rect x="34" y="24" width="1" height="1" fill="#808080"/><rect x="34" y="26" width="1" height="1" fill="#808080"/><rect x="34" y="28" width="1" height="1" fill="#808080"/><rect x="34" y="30" width="1" height="1" fill="#808080"/><rect x="34" y="32" width="1" height="1" fill="#808080"/><rect x="34" y="34" width="1" height="1" fill="#808080"/><rect x="34" y="36" width="1" height="1" fill="#808080"/><rect x="34" y="38" width="1" height="1" fill="#808080"/><rect x="34" y="40" width="1" height="1" fill="#808080"/><rect x="34" y="42" width="1" height="1" fill="#808080"/><rect x="34" y="44" width="1" height="1" fill="#808080"/><rect x="34" y="46" width="1" height="1" fill="#808080"/><rect x="34" y="48" width="1" height="1" fill="#808080"/><rect x="34" y="50" width="1" height="1" fill="#808080"/><rect x="34" y="52" width="1" height="1" fill="#808080"/><rect x="34" y="54" width="1" height="1" fill="#808080"/><rect x="34" y="56" width="1" height="1" fill="#808080"/><rect x="34" y="58" width="1" height="1" fill="#808080"/><rect x="34" y="60" width="1" height="1" fill="#808080"/><rect x="34" y="62" width="1" height="1" fill="#808080"/><rect x="34" y="64" width="1" height="1" fill="#808080"/><rect x="34" y="66" width="1" height="1" fill="#808080"/><rect x="34" y="68" width="1" height="1" fill="#808080"/><rect x="34" y="70" width="1" height="1" fill="#808080"/><rect x="34" y="72" width="1" height="1" fill="#808080"/><rect x="34" y="74" width="1" height="1" fill="#808080"/><rect x="34" y="76" width="1" height="1" fill="#808080"/><rect x="34" y="78" width="1" height="1" fill="#808080"/><rect x="34" y="80" width="1" height="1" fill="#808080"/><rect x="34" y="82" width="1" height="1" fill="#808080"/><rect x="34" y="84" width="1" height="1" fill="#808080"/><rect x="34" y="86" width="1" height="1" fill="#808080"/><rect x="34" y="88" width="1" height="1" fill="#808080"/><rect x="34" y="90" width="1" height="1" fill="#808080"/><rect x="34" y="92" width="1" height="1" fill="#808080"/><rect x="34" y="94" width="1" height="1" fill="#808080"/><rect x="34" y="96" width="1" height="1" fill="#808080"/><rect x="34" y="98" width="1" height="1" fill="#808080"/><rect x="34" y="100" width="1" height="1" fill="#808080"/><rect x="34" y="102" width="1" height="1" fill="#808080"/><rect x="34" y="104" width="1" height="1" fill="#808080"/><rect x="34" y="106" width="1" height="1" fill="#808080"/><rect x="34" y="108" width="1" height="1" fill="#808080"/><rect x="34" y="110" width="1" height="1" fill="#808080"/><rect x="34" y="112" width="1" height="1" fill="#808080"/><rect x="34" y="114" width="1" height="1" fill="#808080"/><rect x="34" y="116" width="1" height="1" fill="#808080"/><rect x="34" y="118" width="1" height="1" fill="#808080"/><rect x="34" y="120" width="1" height="1" fill="#808080"/><rect x="34" y="122" width="1" height="1" fill="#808080"/><rect x="34" y="124" width="1" height="1" fill="#808080"/><rect x="34" y="126" width="1" height="1" fill="#808080"/><rect x="34" y="128" width="1" height="1" fill="#808080"/><rect x="34" y="130" width="1" height="1" fill="#808080"/><rect x="34" y="132" width="1" height="1" fill="#808080"/><rect x="34" y="134" width="1" height="1" fill="#808080"/><rect x="34" y="136" width="1" height="1" fill="#808080"/><rect x="34" y="138" width="1" height="1" fill="#808080"/><rect x="34" y="140" width="1" height="1" fill="#808080"/><rect x="34" y="142" width="1" height="1" fill="#808080"/><rect x="34" y="144" width="1" height="1" fill="#808080"/><rect x="34" y="146" width="1" height="1" fill="#808080"/><rect x="34" y="148" width="1" height="1" fill="#808080"/><rect x="34" y="150" width="1" height="1" fill="#808080"/><rect x="34" y="152" width="1" height="1" fill="#808080"/><rect x="34" y="154" width="1" height="1" fill="#808080"/><rect x="34" y="156" width="1" height="1" fill="#808080"/><rect x="34" y="158" width="1" height="1" fill="#808080"/><rect x="34" y="160" width="1" height="1" fill="#808080"/><rect x="34" y="162" width="1" height="1" fill="#808080"/><rect x="34" y="164" width="1" height="1" fill="#808080"/><rect x="34" y="166" width="1" height="1" fill="#808080"/><rect x="34" y="168" width="1" height="1" fill="#808080"/><rect x="34" y="170" width="1" height="1" fill="#808080"/><rect x="34" y="172" width="1" height="1" fill="#808080"/><rect x="34" y="174" width="1" height="1" fill="#808080"/><rect x="34" y="176" width="1" height="1" fill="#808080"/><rect x="34" y="178" width="1" height="1" fill="#808080"/><rect x="34" y="180" width="1" height="1" fill="#808080"/><rect x="34" y="182" width="1" height="1" fill="#808080"/><rect x="34" y="184" width="1" height="1" fill="#808080"/><rect x="34" y="186" width="1" height="1" fill="#808080"/><rect x="34" y="188" width="1" height="1" fill="#808080"/><rect x="34" y="190" width="1" height="1" fill="#808080"/><rect x="34" y="192" width="1" height="1" fill="#808080"/><rect x="34" y="194" width="1" height="1" fill="#808080"/><rect x="34" y="196" width="1" height="1" fill="#808080"/><rect x="34" y="198" width="1" height="1" fill="#808080"/><rect x="34" y="200" width="1" height="1" fill="#808080"/><rect x="34" y="202" width="1" height="1" fill="#808080"/><rect x="34" y="204" width="1" height="1" fill="#808080"/><rect x="34" y="206" width="1" height="1" fill="#808080"/><rect x="34" y="208" width="1" height="1" fill="#808080"/><rect x="34" y="210" width="1" height="1" fill="#808080"/><rect x="34" y="212" width="1" height="1" fill="#808080"/><rect x="34" y="214" width="1" height="1" fill="#808080"/><rect x="34" y="216" width="1" height="1" fill="#808080"/><rect x="34" y="218" width="1" height="1" fill="#808080"/><rect x="34" y="220" width="1" height="1" fill="#808080"/><rect x="34" y="222" width="1" height="1" fill="#808080"/><rect x="34" y="224" width="1" height="1" fill="#808080"/><rect x="34" y="226" width="1" height="1" fill="#808080"/><rect x="34" y="228" width="1" height="1" fill="#808080"/><rect x="34" y="230" width="1" height="1" fill="#808080"/><rect x="34" y="232" width="1" height="1" fill="#808080"/><rect x="34" y="234" width="1" height="1" fill="#808080"/><rect x="34" y="236" width="1" height="1" fill="#808080"/><rect x="34" y="238" width="1" height="1" fill="#808080"/><rect x="34" y="240" width="1" height="1" fill="#808080"/><rect x="34" y="242" width="1" height="1" fill="#808080"/><rect x="34" y="244" width="1" height="1" fill="#808080"/><rect x="34" y="246" width="1" height="1" fill="#808080"/><rect x="34" y="248" width="1" height="1" fill="#808080"/><rect x="34" y="250" width="1" height="1" fill="#808080"/><rect x="34" y="252" width="1" height="1" fill="#808080"/><rect x="36" y="10" width="1" height="1" fill="#808080"/><rect x="38" y="10" width="1" height="1" fill="#808080"/><rect x="40" y="10" width="1" height="1" fill="#808080"/><rect x="42" y="10" width="1" height="1" fill="#808080"/><rect x="44" y="10" width="1" height="1" fill="#808080"/><rect x="46" y="10" width="1" height="1" fill="#808080"/><circle cx="53.5" cy="9" r="6" fill="url(#rw)"/><rect x="36" y="28" width="1" height="1" fill="#808080"/><rect x="38" y="28" width="1" height="1" fill="#808080"/><rect x="40" y="28" width="1" height="1" fill="#808080"/><rect x="42" y="28" width="1" height="1" fill="#808080"/><rect x="44" y="28" width="1" height="1" fill="#808080"/><rect x="46" y="28" width="1" height="1" fill="#808080"/><circle cx="53.5" cy="27" r="6" fill="url(#rb)"/><rect x="36" y="46" width="1" height="1" fill="#808080"/><rect x="38" y="46" width="1" height="1" fill="#808080"/><rect x="40" y="46" width="1" height="1" fill="#808080"/><rect x="42" y="46" width="1" height="1" fill="#808080"/><rect x="44" y="46" width="1" height="1" fill="#808080"/><rect x="46" y="46" width="1" height="1" fill="#808080"/><circle cx="53.5" cy="45" r="6" fill="url(#rw)"/><rect x="36" y="64" width="1" height="1" fill="#808080"/><rect x="38" y="64" width="1" height="1" fill="#808080"/><rect x="40" y="64" width="1" height="1" fill="#808080"/><rect x="42" y="64" width="1" height="1" fill="#808080"/><rect x="44" y="64" width="1" height="1" fill="#808080"/><rect x="46" y="64" width="1" height="1" fill="#808080"/><circle cx="53.5" cy="63" r="6" fill="url(#rb)"/><rect x="36" y="82" width="1" height="1" fill="#808080"/><rect x="38" y="82" width="1" height="1" fill="#808080"/><rect x="40" y="82" width="1" height="1" fill="#808080"/><rect x="42" y="82" width="1" height="1" fill="#808080"/><rect x="44" y="82" width="1" height="1" fill="#808080"/><rect x="46" y="82" width="1" height="1" fill="#808080"/><circle cx="53.5" cy="81" r="6" fill="url(#rw)"/><rect x="36" y="100" width="1" height="1" fill="#808080"/><rect x="38" y="100" width="1" height="1" fill="#808080"/><rect x="40" y="100" width="1" height="1" fill="#808080"/><rect x="42" y="100" width="1" height="1" fill="#808080"/><rect x="44" y="100" width="1" height="1" fill="#808080"/><rect x="46" y="100" width="1" height="1" fill="#808080"/><circle cx="53.5" cy="99" r="6" fill="url(#rb)"/><rect x="36" y="118" width="1" height="1" fill="#808080"/><rect x="38" y="118" width="1" height="1" fill="#808080"/><rect x="40" y="118" width="1" height="1" fill="#808080"/><rect x="42" y="118" width="1" height="1" fill="#808080"/><rect x="44" y="118" width="1" height="1" fill="#808080"/><rect x="46" y="118" width="1" height="1" fill="#808080"/><circle cx="53.5" cy="117" r="6" fill="url(#rw)"/><rect x="55" y="136" width="1" height="1" fill="#808080"/><rect x="57" y="136" width="1" height="1" fill="#808080"/><rect x="59" y="136" width="1" height="1" fill="#808080"/><rect x="61" y="136" width="1" height="1" fill="#808080"/><rect x="63" y="136" width="1" height="1" fill="#808080"/><rect x="65" y="136" width="1" height="1" fill="#808080"/><circle cx="72.5" cy="135" r="6" fill="url(#rb)"/><rect x="74" y="154" width="1" height="1" fill="#808080"/><rect x="76" y="154" width="1" height="1" fill="#808080"/><rect x="78" y="154" width="1" height="1" fill="#808080"/><rect x="80" y="154" width="1" height="1" fill="#808080"/><rect x="82" y="154" width="1" height="1" fill="#808080"/><rect x="84" y="154" width="1" height="1" fill="#808080"/><circle cx="91.5" cy="153" r="6" fill="url(#rw)"/><rect x="74" y="172" width="1" height="1" fill="#808080"/><rect x="76" y="172" width="1" height="1" fill="#808080"/><rect x="78" y="172" width="1" height="1" fill="#808080"/><rect x="80" y="172" width="1" height="1" fill="#808080"/><rect x="82" y="172" width="1" height="1" fill="#808080"/><rect x="84" y="172" width="1" height="1" fill="#808080"/><circle cx="91.5" cy="171" r="6" fill="url(#rb)"/><rect x="74" y="190" width="1" height="1" fill="#808080"/><rect x="76" y="190" width="1" height="1" fill="#808080"/><rect x="78" y="190" width="1" height="1" fill="#808080"/><rect x="80" y="190" width="1" height="1" fill="#808080"/><rect x="82" y="190" width="1" height="1" fill="#808080"/><rect x="84" y="190" width="1" height="1" fill="#808080"/><circle cx="91.5" cy="189" r="6" fill="url(#rw)"/><path d="M87.5 191.5h8l-4-4.5z" fill="#e01010"/><rect x="36" y="208" width="1" height="1" fill="#808080"/><rect x="38" y="208" width="1" height="1" fill="#808080"/><rect x="40" y="208" width="1" height="1" fill="#808080"/><rect x="42" y="208" width="1" height="1" fill="#808080"/><rect x="44" y="208" width="1" height="1" fill="#808080"/><rect x="46" y="208" width="1" height="1" fill="#808080"/><circle cx="53.5" cy="207" r="6" fill="url(#rb)"/><rect x="36" y="226" width="1" height="1" fill="#808080"/><rect x="38" y="226" width="1" height="1" fill="#808080"/><rect x="40" y="226" width="1" height="1" fill="#808080"/><rect x="42" y="226" width="1" height="1" fill="#808080"/><rect x="44" y="226" width="1" height="1" fill="#808080"/><rect x="46" y="226" width="1" height="1" fill="#808080"/><circle cx="53.5" cy="225" r="6" fill="url(#rw)"/><rect x="36" y="244" width="1" height="1" fill="#808080"/><rect x="38" y="244" width="1" height="1" fill="#808080"/><rect x="40" y="244" width="1" height="1" fill="#808080"/><rect x="42" y="244" width="1" height="1" fill="#808080"/><rect x="44" y="244" width="1" height="1" fill="#808080"/><rect x="46" y="244" width="1" height="1" fill="#808080"/><circle cx="53.5" cy="243" r="6" fill="url(#rb)"/><rect x="53" y="125" width="1" height="1" fill="#808080"/><rect x="53" y="127" width="1" height="1" fill="#808080"/><rect x="53" y="129" width="1" height="1" fill="#808080"/><rect x="53" y="131" width="1" height="1" fill="#808080"/><rect x="72" y="143" width="1" height="1" fill="#808080"/><rect x="72" y="145" width="1" height="1" fill="#808080"/><rect x="72" y="147" width="1" height="1" fill="#808080"/><rect x="72" y="149" width="1" height="1" fill="#808080"/><rect x="72" y="151" width="1" height="1" fill="#808080"/><rect x="72" y="153" width="1" height="1" fill="#808080"/><rect x="72" y="155" width="1" height="1" fill="#808080"/><rect x="72" y="157" width="1" height="1" fill="#808080"/><rect x="72" y="159" width="1" height="1" fill="#808080"/><rect x="72" y="161" width="1" height="1" fill="#808080"/><rect x="72" y="163" width="1" height="1" fill="#808080"/><rect x="72" y="165" width="1" height="1" fill="#808080"/><rect x="72" y="167" width="1" height="1" fill="#808080"/><rect x="72" y="169" width="1" height="1" fill="#808080"/><rect x="72" y="171" width="1" height="1" fill="#808080"/><rect x="72" y="173" width="1" height="1" fill="#808080"/><rect x="72" y="175" width="1" height="1" fill="#808080"/><rect x="72" y="177" width="1" height="1" fill="#808080"/><rect x="72" y="179" width="1" height="1" fill="#808080"/><rect x="72" y="181" width="1" height="1" fill="#808080"/><rect x="72" y="183" width="1" height="1" fill="#808080"/><rect x="72" y="185" width="1" height="1" fill="#808080"/><rect x="72" y="187" width="1" height="1" fill="#808080"/><rect x="72" y="189" width="1" height="1" fill="#808080"/><rect x="29.5" y="113.5" width="9" height="9" fill="#fff" stroke="#909090" stroke-width="1"/><path d="M32 118.5h5" stroke="#2a3a90" stroke-width="1"/><rect x="48.5" y="131.5" width="9" height="9" fill="#fff" stroke="#909090" stroke-width="1"/><path d="M51 136.5h5" stroke="#2a3a90" stroke-width="1"/></svg>
<div class="a" style="left:768px;top:407px;width:16px;height:27px;background:#cdcdcd"></div>
<svg style="left:772px;top:321px" width="8" height="8" viewBox="0 0 8 8" ><path d="M0.9 6.2L3.6 2.6 6.3 6.2" fill="none" stroke="#505050" stroke-width="2"/></svg>
<svg style="left:772px;top:559px" width="8" height="8" viewBox="0 0 8 8" ><path d="M0.9 1.2L3.6 4.8 6.3 1.2" fill="none" stroke="#505050" stroke-width="2"/></svg>
<div class="t" style="left:646px;top:319px;font-size:12px;color:#000;transform:scaleX(0.93);transform-origin:0 0">C7</div>
<div class="t" style="left:646px;top:337px;font-size:12px;color:#000;transform:scaleX(0.93);transform-origin:0 0">H10</div>
<div class="t" style="left:646px;top:355px;font-size:12px;color:#000;transform:scaleX(0.93);transform-origin:0 0">H8</div>
<div class="t" style="left:646px;top:373px;font-size:12px;color:#000;transform:scaleX(0.93);transform-origin:0 0">D9</div>
<div class="t" style="left:646px;top:391px;font-size:12px;color:#000;transform:scaleX(0.93);transform-origin:0 0">F8</div>
<div class="t" style="left:646px;top:409px;font-size:12px;color:#000;transform:scaleX(0.93);transform-origin:0 0">F10</div>
<div class="t" style="left:646px;top:427px;font-size:12px;color:#000;transform:scaleX(0.93);transform-origin:0 0">M8</div>
<div class="t" style="left:665px;top:445px;font-size:12px;color:#000;transform:scaleX(0.93);transform-origin:0 0">J8</div>
<div class="t" style="left:684px;top:463px;font-size:12px;color:#000;transform:scaleX(0.93);transform-origin:0 0">J9</div>
<div class="t" style="left:684px;top:481px;font-size:12px;color:#000;transform:scaleX(0.93);transform-origin:0 0">H9</div>
<svg style="left:682px;top:496px" width="68" height="18" viewBox="0 0 68 18" shape-rendering="crispEdges"><rect x="0.5" y="0.5" width="67" height="17" fill="#0078d7" stroke="#e07a20" stroke-width="1"/><rect x="0.5" y="0.5" width="67" height="17" fill="none" stroke="#000" stroke-width="1" stroke-dasharray="1 1"/></svg>
<div class="t" style="left:684px;top:499px;font-size:12px;color:#fff;transform:scaleX(0.93);transform-origin:0 0">J7 Comment</div>
<div class="t" style="left:646px;top:517px;font-size:12px;color:#000;transform:scaleX(0.93);transform-origin:0 0">J7</div>
<div class="t" style="left:646px;top:535px;font-size:12px;color:#000;transform:scaleX(0.93);transform-origin:0 0">J8</div>
<div class="t" style="left:646px;top:553px;font-size:12px;color:#000;transform:scaleX(0.93);transform-origin:0 0">L9</div>
<div class="a" style="left:79px;top:130px;width:425px;height:424px;background:#808080"></div>
<svg style="left:77px;top:127px" width="424" height="424" viewBox="0 0 424 424"><defs><g id="wood" shape-rendering="crispEdges"><rect x="0" y="0" width="1" height="424" fill="#e2a044"/><rect x="1" y="0" width="1" height="424" fill="#e2a044"/><rect x="2" y="0" width="1" height="424" fill="#e2a044"/><rect x="3" y="0" width="1" height="424" fill="#e9ab50"/><rect x="4" y="0" width="1" height="424" fill="#e3a246"/><rect x="5" y="0" width="1" height="424" fill="#e2a044"/><rect x="6" y="0" width="1" height="424" fill="#e3a246"/><rect x="7" y="0" width="1" height="424" fill="#e09e42"/><rect x="8" y="0" width="1" height="424" fill="#e2a044"/><rect x="9" y="0" width="1" height="424" fill="#de9c40"/><rect x="10" y="0" width="1" height="424" fill="#e3a246"/><rect x="11" y="0" width="1" height="424" fill="#e09e42"/><rect x="12" y="0" width="1" height="424" fill="#e6a548"/><rect x="13" y="0" width="1" height="424" fill="#eaad54"/><rect x="14" y="0" width="1" height="424" fill="#e2a044"/><rect x="15" y="0" width="1" height="424" fill="#e3a246"/><rect x="16" y="0" width="1" height="424" fill="#e6a548"/><rect x="17" y="0" width="1" height="424" fill="#e09e42"/><rect x="18" y="0" width="1" height="424" fill="#e6a548"/><rect x="19" y="0" width="1" height="424" fill="#e6a548"/><rect x="20" y="0" width="1" height="424" fill="#e9ab50"/><rect x="21" y="0" width="1" height="424" fill="#e9ab50"/><rect x="22" y="0" width="1" height="424" fill="#e6a548"/><rect x="23" y="0" width="1" height="424" fill="#e2a044"/><rect x="24" y="0" width="1" height="424" fill="#e5a64a"/><rect x="25" y="0" width="1" height="424" fill="#e2a044"/><rect x="26" y="0" width="1" height="424" fill="#e9ab50"/><rect x="27" y="0" width="1" height="424" fill="#e9ab50"/><rect x="28" y="0" width="1" height="424" fill="#de9c40"/><rect x="29" y="0" width="1" height="424" fill="#e2a044"/><rect x="30" y="0" width="1" height="424" fill="#e6a548"/><rect x="31" y="0" width="1" height="424" fill="#e09e42"/><rect x="32" y="0" width="1" height="424" fill="#e2a044"/><rect x="33" y="0" width="1" height="424" fill="#de9c40"/><rect x="34" y="0" width="1" height="424" fill="#eaad54"/><rect x="35" y="0" width="1" height="424" fill="#e09e42"/><rect x="36" y="0" width="1" height="424" fill="#de9c40"/><rect x="37" y="0" width="1" height="424" fill="#e5a64a"/><rect x="38" y="0" width="1" height="424" fill="#e9ab50"/><rect x="39" y="0" width="1" height="424" fill="#de9c40"/><rect x="40" y="0" width="1" height="424" fill="#e6a548"/><rect x="41" y="0" width="1" height="424" fill="#e09e42"/><rect x="42" y="0" width="1" height="424" fill="#e09e42"/><rect x="43" y="0" width="1" height="424" fill="#eaad54"/><rect x="44" y="0" width="1" height="424" fill="#e09e42"/><rect x="45" y="0" width="1" height="424" fill="#de9c40"/><rect x="46" y="0" width="1" height="424" fill="#eaad54"/><rect x="47" y="0" width="1" height="424" fill="#e09e42"/><rect x="48" y="0" width="1" height="424" fill="#e6a548"/><rect x="49" y="0" width="1" height="424" fill="#e6a548"/><rect x="50" y="0" width="1" height="424" fill="#e9ab50"/><rect x="51" y="0" width="1" height="424" fill="#e9ab50"/><rect x="52" y="0" width="1" height="424" fill="#e6a548"/><rect x="53" y="0" width="1" height="424" fill="#e2a044"/><rect x="54" y="0" width="1" height="424" fill="#eaad54"/><rect x="55" y="0" width="1" height="424" fill="#eaad54"/><rect x="56" y="0" width="1" height="424" fill="#eaad54"/><rect x="57" y="0" width="1" height="424" fill="#e09e42"/><rect x="58" y="0" width="1" height="424" fill="#e9ab50"/><rect x="59" y="0" width="1" height="424" fill="#de9c40"/><rect x="60" y="0" width="1" height="424" fill="#e5a64a"/><rect x="61" y="0" width="1" height="424" fill="#e09e42"/><rect x="62" y="0" width="1" height="424" fill="#de9c40"/><rect x="63" y="0" width="1" height="424" fill="#e5a64a"/><rect x="64" y="0" width="1" height="424" fill="#e6a548"/><rect x="65" y="0" width="1" height="424" fill="#eaad54"/><rect x="66" y="0" width="1" height="424" fill="#e09e42"/><rect x="67" y="0" width="1" height="424" fill="#e3a246"/><rect x="68" y="0" width="1" height="424" fill="#e9ab50"/><rect x="69" y="0" width="1" height="424" fill="#e09e42"/><rect x="70" y="0" width="1" height="424" fill="#e6a548"/><rect x="71" y="0" width="1" height="424" fill="#e6a548"/><rect x="72" y="0" width="1" height="424" fill="#e2a044"/><rect x="73" y="0" width="1" height="424" fill="#e2a044"/><rect x="74" y="0" width="1" height="424" fill="#e3a246"/><rect x="75" y="0" width="1" height="424" fill="#e9ab50"/><rect x="76" y="0" width="1" height="424" fill="#e2a044"/><rect x="77" y="0" width="1" height="424" fill="#e9ab50"/><rect x="78" y="0" width="1" height="424" fill="#e3a246"/><rect x="79" y="0" width="1" height="424" fill="#eaad54"/><rect x="80" y="0" width="1" height="424" fill="#eaad54"/><rect x="81" y="0" width="1" height="424" fill="#e09e42"/><rect x="82" y="0" width="1" height="424" fill="#eaad54"/><rect x="83" y="0" width="1" height="424" fill="#eaad54"/><rect x="84" y="0" width="1" height="424" fill="#e9ab50"/><rect x="85" y="0" width="1" height="424" fill="#e6a548"/><rect x="86" y="0" width="1" height="424" fill="#de9c40"/><rect x="87" y="0" width="1" height="424" fill="#de9c40"/><rect x="88" y="0" width="1" height="424" fill="#e6a548"/><rect x="89" y="0" width="1" height="424" fill="#e9ab50"/><rect x="90" y="0" width="1" height="424" fill="#e3a246"/><rect x="91" y="0" width="1" height="424" fill="#eaad54"/><rect x="92" y="0" width="1" height="424" fill="#e09e42"/><rect x="93" y="0" width="1" height="424" fill="#e6a548"/><rect x="94" y="0" width="1" height="424" fill="#e3a246"/><rect x="95" y="0" width="1" height="424" fill="#e9ab50"/><rect x="96" y="0" width="1" height="424" fill="#e2a044"/><rect x="97" y="0" width="1" height="424" fill="#de9c40"/><rect x="98" y="0" width="1" height="424" fill="#e6a548"/><rect x="99" y="0" width="1" height="424" fill="#e5a64a"/><rect x="100" y="0" width="1" height="424" fill="#de9c40"/><rect x="101" y="0" width="1" height="424" fill="#eaad54"/><rect x="102" y="0" width="1" height="424" fill="#e09e42"/><rect x="103" y="0" width="1" height="424" fill="#e09e42"/><rect x="104" y="0" width="1" height="424" fill="#e09e42"/><rect x="105" y="0" width="1" height="424" fill="#e9ab50"/><rect x="106" y="0" width="1" height="424" fill="#e9ab50"/><rect x="107" y="0" width="1" height="424" fill="#e6a548"/><rect x="108" y="0" width="1" height="424" fill="#e5a64a"/><rect x="109" y="0" width="1" height="424" fill="#e5a64a"/><rect x="110" y="0" width="1" height="424" fill="#e2a044"/><rect x="111" y="0" width="1" height="424" fill="#e3a246"/><rect x="112" y="0" width="1" height="424" fill="#e2a044"/><rect x="113" y="0" width="1" height="424" fill="#e3a246"/><rect x="114" y="0" width="1" height="424" fill="#eaad54"/><rect x="115" y="0" width="1" height="424" fill="#e3a246"/><rect x="116" y="0" width="1" height="424" fill="#e3a246"/><rect x="117" y="0" width="1" height="424" fill="#de9c40"/><rect x="118" y="0" width="1" height="424" fill="#e9ab50"/><rect x="119" y="0" width="1" height="424" fill="#e9ab50"/><rect x="120" y="0" width="1" height="424" fill="#e9ab50"/><rect x="121" y="0" width="1" height="424" fill="#e3a246"/><rect x="122" y="0" width="1" height="424" fill="#e9ab50"/><rect x="123" y="0" width="1" height="424" fill="#eaad54"/><rect x="124" y="0" width="1" height="424" fill="#e2a044"/><rect x="125" y="0" width="1" height="424" fill="#e09e42"/><rect x="126" y="0" width="1" height="424" fill="#eaad54"/><rect x="127" y="0" width="1" height="424" fill="#e6a548"/><rect x="128" y="0" width="1" height="424" fill="#e09e42"/><rect x="129" y="0" width="1" height="424" fill="#e09e42"/><rect x="130" y="0" width="1" height="424" fill="#e6a548"/><rect x="131" y="0" width="1" height="424" fill="#de9c40"/><rect x="132" y="0" width="1" height="424" fill="#e9ab50"/><rect x="133" y="0" width="1" height="424" fill="#eaad54"/><rect x="134" y="0" width="1" height="424" fill="#de9c40"/><rect x="135" y="0" width="1" height="424" fill="#eaad54"/><rect x="136" y="0" width="1" height="424" fill="#e2a044"/><rect x="137" y="0" width="1" height="424" fill="#de9c40"/><rect x="138" y="0" width="1" height="424" fill="#e3a246"/><rect x="139" y="0" width="1" height="424" fill="#e09e42"/><rect x="140" y="0" width="1" height="424" fill="#e3a246"/><rect x="141" y="0" width="1" height="424" fill="#e9ab50"/><rect x="142" y="0" width="1" height="424" fill="#e2a044"/><rect x="143" y="0" width="1" height="424" fill="#e09e42"/><rect x="144" y="0" width="1" height="424" fill="#de9c40"/><rect x="145" y="0" width="1" height="424" fill="#e9ab50"/><rect x="146" y="0" width="1" height="424" fill="#e9ab50"/><rect x="147" y="0" width="1" height="424" fill="#e6a548"/><rect x="148" y="0" width="1" height="424" fill="#e09e42"/><rect x="149" y="0" width="1" height="424" fill="#de9c40"/><rect x="150" y="0" width="1" height="424" fill="#eaad54"/><rect x="151" y="0" width="1" height="424" fill="#e2a044"/><rect x="152" y="0" width="1" height="424" fill="#e9ab50"/><rect x="153" y="0" width="1" height="424" fill="#e6a548"/><rect x="154" y="0" width="1" height="424" fill="#e6a548"/><rect x="155" y="0" width="1" height="424" fill="#e3a246"/><rect x="156" y="0" width="1" height="424" fill="#de9c40"/><rect x="157" y="0" width="1" height="424" fill="#e5a64a"/><rect x="158" y="0" width="1" height="424" fill="#e3a246"/><rect x="159" y="0" width="1" height="424" fill="#e09e42"/><rect x="160" y="0" width="1" height="424" fill="#e5a64a"/><rect x="161" y="0" width="1" height="424" fill="#e3a246"/><rect x="162" y="0" width="1" height="424" fill="#e2a044"/><rect x="163" y="0" width="1" height="424" fill="#e5a64a"/><rect x="164" y="0" width="1" height="424" fill="#e3a246"/><rect x="165" y="0" width="1" height="424" fill="#e6a548"/><rect x="166" y="0" width="1" height="424" fill="#e6a548"/><rect x="167" y="0" width="1" height="424" fill="#e2a044"/><rect x="168" y="0" width="1" height="424" fill="#e5a64a"/><rect x="169" y="0" width="1" height="424" fill="#de9c40"/><rect x="170" y="0" width="1" height="424" fill="#e6a548"/><rect x="171" y="0" width="1" height="424" fill="#e6a548"/><rect x="172" y="0" width="1" height="424" fill="#e09e42"/><rect x="173" y="0" width="1" height="424" fill="#e2a044"/><rect x="174" y="0" width="1" height="424" fill="#e09e42"/><rect x="175" y="0" width="1" height="424" fill="#de9c40"/><rect x="176" y="0" width="1" height="424" fill="#e5a64a"/><rect x="177" y="0" width="1" height="424" fill="#e3a246"/><rect x="178" y="0" width="1" height="424" fill="#e09e42"/><rect x="179" y="0" width="1" height="424" fill="#e09e42"/><rect x="180" y="0" width="1" height="424" fill="#e2a044"/><rect x="181" y="0" width="1" height="424" fill="#e5a64a"/><rect x="182" y="0" width="1" height="424" fill="#e6a548"/><rect x="183" y="0" width="1" height="424" fill="#e3a246"/><rect x="184" y="0" width="1" height="424" fill="#e5a64a"/><rect x="185" y="0" width="1" height="424" fill="#e5a64a"/><rect x="186" y="0" width="1" height="424" fill="#e09e42"/><rect x="187" y="0" width="1" height="424" fill="#e2a044"/><rect x="188" y="0" width="1" height="424" fill="#e09e42"/><rect x="189" y="0" width="1" height="424" fill="#eaad54"/><rect x="190" y="0" width="1" height="424" fill="#e6a548"/><rect x="191" y="0" width="1" height="424" fill="#e2a044"/><rect x="192" y="0" width="1" height="424" fill="#e6a548"/><rect x="193" y="0" width="1" height="424" fill="#eaad54"/><rect x="194" y="0" width="1" height="424" fill="#eaad54"/><rect x="195" y="0" width="1" height="424" fill="#e6a548"/><rect x="196" y="0" width="1" height="424" fill="#e09e42"/><rect x="197" y="0" width="1" height="424" fill="#e09e42"/><rect x="198" y="0" width="1" height="424" fill="#e09e42"/><rect x="199" y="0" width="1" height="424" fill="#e09e42"/><rect x="200" y="0" width="1" height="424" fill="#de9c40"/><rect x="201" y="0" width="1" height="424" fill="#eaad54"/><rect x="202" y="0" width="1" height="424" fill="#e5a64a"/><rect x="203" y="0" width="1" height="424" fill="#eaad54"/><rect x="204" y="0" width="1" height="424" fill="#e2a044"/><rect x="205" y="0" width="1" height="424" fill="#e2a044"/><rect x="206" y="0" width="1" height="424" fill="#e2a044"/><rect x="207" y="0" width="1" height="424" fill="#e09e42"/><rect x="208" y="0" width="1" height="424" fill="#e6a548"/><rect x="209" y="0" width="1" height="424" fill="#de9c40"/><rect x="210" y="0" width="1" height="424" fill="#e09e42"/><rect x="211" y="0" width="1" height="424" fill="#e2a044"/><rect x="212" y="0" width="1" height="424" fill="#e6a548"/><rect x="213" y="0" width="1" height="424" fill="#e9ab50"/><rect x="214" y="0" width="1" height="424" fill="#e09e42"/><rect x="215" y="0" width="1" height="424" fill="#e2a044"/><rect x="216" y="0" width="1" height="424" fill="#e2a044"/><rect x="217" y="0" width="1" height="424" fill="#de9c40"/><rect x="218" y="0" width="1" height="424" fill="#e6a548"/><rect x="219" y="0" width="1" height="424" fill="#e5a64a"/><rect x="220" y="0" width="1" height="424" fill="#de9c40"/><rect x="221" y="0" width="1" height="424" fill="#e3a246"/><rect x="222" y="0" width="1" height="424" fill="#e9ab50"/><rect x="223" y="0" width="1" height="424" fill="#e3a246"/><rect x="224" y="0" width="1" height="424" fill="#e5a64a"/><rect x="225" y="0" width="1" height="424" fill="#e2a044"/><rect x="226" y="0" width="1" height="424" fill="#e2a044"/><rect x="227" y="0" width="1" height="424" fill="#e9ab50"/><rect x="228" y="0" width="1" height="424" fill="#e5a64a"/><rect x="229" y="0" width="1" height="424" fill="#eaad54"/><rect x="230" y="0" width="1" height="424" fill="#de9c40"/><rect x="231" y="0" width="1" height="424" fill="#e9ab50"/><rect x="232" y="0" width="1" height="424" fill="#eaad54"/><rect x="233" y="0" width="1" height="424" fill="#e9ab50"/><rect x="234" y="0" width="1" height="424" fill="#e9ab50"/><rect x="235" y="0" width="1" height="424" fill="#eaad54"/><rect x="236" y="0" width="1" height="424" fill="#e9ab50"/><rect x="237" y="0" width="1" height="424" fill="#e5a64a"/><rect x="238" y="0" width="1" height="424" fill="#e9ab50"/><rect x="239" y="0" width="1" height="424" fill="#e3a246"/><rect x="240" y="0" width="1" height="424" fill="#e3a246"/><rect x="241" y="0" width="1" height="424" fill="#e2a044"/><rect x="242" y="0" width="1" height="424" fill="#e5a64a"/><rect x="243" y="0" width="1" height="424" fill="#e6a548"/><rect x="244" y="0" width="1" height="424" fill="#e09e42"/><rect x="245" y="0" width="1" height="424" fill="#de9c40"/><rect x="246" y="0" width="1" height="424" fill="#e3a246"/><rect x="247" y="0" width="1" height="424" fill="#e09e42"/><rect x="248" y="0" width="1" height="424" fill="#e2a044"/><rect x="249" y="0" width="1" height="424" fill="#e2a044"/><rect x="250" y="0" width="1" height="424" fill="#de9c40"/><rect x="251" y="0" width="1" height="424" fill="#e9ab50"/><rect x="252" y="0" width="1" height="424" fill="#eaad54"/><rect x="253" y="0" width="1" height="424" fill="#eaad54"/><rect x="254" y="0" width="1" height="424" fill="#e2a044"/><rect x="255" y="0" width="1" height="424" fill="#e5a64a"/><rect x="256" y="0" width="1" height="424" fill="#e2a044"/><rect x="257" y="0" width="1" height="424" fill="#e5a64a"/><rect x="258" y="0" width="1" height="424" fill="#e09e42"/><rect x="259" y="0" width="1" height="424" fill="#e6a548"/><rect x="260" y="0" width="1" height="424" fill="#de9c40"/><rect x="261" y="0" width="1" height="424" fill="#e6a548"/><rect x="262" y="0" width="1" height="424" fill="#de9c40"/><rect x="263" y="0" width="1" height="424" fill="#e5a64a"/><rect x="264" y="0" width="1" height="424" fill="#de9c40"/><rect x="265" y="0" width="1" height="424" fill="#e6a548"/><rect x="266" y="0" width="1" height="424" fill="#e3a246"/><rect x="267" y="0" width="1" height="424" fill="#eaad54"/><rect x="268" y="0" width="1" height="424" fill="#e2a044"/><rect x="269" y="0" width="1" height="424" fill="#e9ab50"/><rect x="270" y="0" width="1" height="424" fill="#e6a548"/><rect x="271" y="0" width="1" height="424" fill="#de9c40"/><rect x="272" y="0" width="1" height="424" fill="#e9ab50"/><rect x="273" y="0" width="1" height="424" fill="#e3a246"/><rect x="274" y="0" width="1" height="424" fill="#e6a548"/><rect x="275" y="0" width="1" height="424" fill="#e09e42"/><rect x="276" y="0" width="1" height="424" fill="#e2a044"/><rect x="277" y="0" width="1" height="424" fill="#e09e42"/><rect x="278" y="0" width="1" height="424" fill="#e5a64a"/><rect x="279" y="0" width="1" height="424" fill="#e09e42"/><rect x="280" y="0" width="1" height="424" fill="#e9ab50"/><rect x="281" y="0" width="1" height="424" fill="#e9ab50"/><rect x="282" y="0" width="1" height="424" fill="#e2a044"/><rect x="283" y="0" width="1" height="424" fill="#de9c40"/><rect x="284" y="0" width="1" height="424" fill="#e3a246"/><rect x="285" y="0" width="1" height="424" fill="#e6a548"/><rect x="286" y="0" width="1" height="424" fill="#e2a044"/><rect x="287" y="0" width="1" height="424" fill="#e6a548"/><rect x="288" y="0" width="1" height="424" fill="#e3a246"/><rect x="289" y="0" width="1" height="424" fill="#e9ab50"/><rect x="290" y="0" width="1" height="424" fill="#de9c40"/><rect x="291" y="0" width="1" height="424" fill="#e5a64a"/><rect x="292" y="0" width="1" height="424" fill="#e3a246"/><rect x="293" y="0" width="1" height="424" fill="#eaad54"/><rect x="294" y="0" width="1" height="424" fill="#e9ab50"/><rect x="295" y="0" width="1" height="424" fill="#e09e42"/><rect x="296" y="0" width="1" height="424" fill="#eaad54"/><rect x="297" y="0" width="1" height="424" fill="#eaad54"/><rect x="298" y="0" width="1" height="424" fill="#e3a246"/><rect x="299" y="0" width="1" height="424" fill="#e2a044"/><rect x="300" y="0" width="1" height="424" fill="#e2a044"/><rect x="301" y="0" width="1" height="424" fill="#e9ab50"/><rect x="302" y="0" width="1" height="424" fill="#e6a548"/><rect x="303" y="0" width="1" height="424" fill="#eaad54"/><rect x="304" y="0" width="1" height="424" fill="#e5a64a"/><rect x="305" y="0" width="1" height="424" fill="#e2a044"/><rect x="306" y="0" width="1" height="424" fill="#e5a64a"/><rect x="307" y="0" width="1" height="424" fill="#e9ab50"/><rect x="308" y="0" width="1" height="424" fill="#e09e42"/><rect x="309" y="0" width="1" height="424" fill="#e09e42"/><rect x="310" y="0" width="1" height="424" fill="#e9ab50"/><rect x="311" y="0" width="1" height="424" fill="#e9ab50"/><rect x="312" y="0" width="1" height="424" fill="#eaad54"/><rect x="313" y="0" width="1" height="424" fill="#e09e42"/><rect x="314" y="0" width="1" height="424" fill="#de9c40"/><rect x="315" y="0" width="1" height="424" fill="#e5a64a"/><rect x="316" y="0" width="1" height="424" fill="#de9c40"/><rect x="317" y="0" width="1" height="424" fill="#e6a548"/><rect x="318" y="0" width="1" height="424" fill="#e5a64a"/><rect x="319" y="0" width="1" height="424" fill="#e09e42"/><rect x="320" y="0" width="1" height="424" fill="#e6a548"/><rect x="321" y="0" width="1" height="424" fill="#e2a044"/><rect x="322" y="0" width="1" height="424" fill="#e5a64a"/><rect x="323" y="0" width="1" height="424" fill="#eaad54"/><rect x="324" y="0" width="1" height="424" fill="#de9c40"/><rect x="325" y="0" width="1" height="424" fill="#e2a044"/><rect x="326" y="0" width="1" height="424" fill="#e6a548"/><rect x="327" y="0" width="1" height="424" fill="#e9ab50"/><rect x="328" y="0" width="1" height="424" fill="#e09e42"/><rect x="329" y="0" width="1" height="424" fill="#eaad54"/><rect x="330" y="0" width="1" height="424" fill="#e6a548"/><rect x="331" y="0" width="1" height="424" fill="#e3a246"/><rect x="332" y="0" width="1" height="424" fill="#e5a64a"/><rect x="333" y="0" width="1" height="424" fill="#e3a246"/><rect x="334" y="0" width="1" height="424" fill="#e2a044"/><rect x="335" y="0" width="1" height="424" fill="#e3a246"/><rect x="336" y="0" width="1" height="424" fill="#e2a044"/><rect x="337" y="0" width="1" height="424" fill="#e2a044"/><rect x="338" y="0" width="1" height="424" fill="#e09e42"/><rect x="339" y="0" width="1" height="424" fill="#e9ab50"/><rect x="340" y="0" width="1" height="424" fill="#e2a044"/><rect x="341" y="0" width="1" height="424" fill="#de9c40"/><rect x="342" y="0" width="1" height="424" fill="#e3a246"/><rect x="343" y="0" width="1" height="424" fill="#de9c40"/><rect x="344" y="0" width="1" height="424" fill="#de9c40"/><rect x="345" y="0" width="1" height="424" fill="#eaad54"/><rect x="346" y="0" width="1" height="424" fill="#e9ab50"/><rect x="347" y="0" width="1" height="424" fill="#de9c40"/><rect x="348" y="0" width="1" height="424" fill="#e3a246"/><rect x="349" y="0" width="1" height="424" fill="#de9c40"/><rect x="350" y="0" width="1" height="424" fill="#e2a044"/><rect x="351" y="0" width="1" height="424" fill="#e9ab50"/><rect x="352" y="0" width="1" height="424" fill="#eaad54"/><rect x="353" y="0" width="1" height="424" fill="#e09e42"/><rect x="354" y="0" width="1" height="424" fill="#e6a548"/><rect x="355" y="0" width="1" height="424" fill="#eaad54"/><rect x="356" y="0" width="1" height="424" fill="#e6a548"/><rect x="357" y="0" width="1" height="424" fill="#e6a548"/><rect x="358" y="0" width="1" height="424" fill="#eaad54"/><rect x="359" y="0" width="1" height="424" fill="#e09e42"/><rect x="360" y="0" width="1" height="424" fill="#e2a044"/><rect x="361" y="0" width="1" height="424" fill="#e09e42"/><rect x="362" y="0" width="1" height="424" fill="#e3a246"/><rect x="363" y="0" width="1" height="424" fill="#e09e42"/><rect x="364" y="0" width="1" height="424" fill="#e2a044"/><rect x="365" y="0" width="1" height="424" fill="#eaad54"/><rect x="366" y="0" width="1" height="424" fill="#eaad54"/><rect x="367" y="0" width="1" height="424" fill="#de9c40"/><rect x="368" y="0" width="1" height="424" fill="#e9ab50"/><rect x="369" y="0" width="1" height="424" fill="#e2a044"/><rect x="370" y="0" width="1" height="424" fill="#e2a044"/><rect x="371" y="0" width="1" height="424" fill="#e3a246"/><rect x="372" y="0" width="1" height="424" fill="#e5a64a"/><rect x="373" y="0" width="1" height="424" fill="#eaad54"/><rect x="374" y="0" width="1" height="424" fill="#e2a044"/><rect x="375" y="0" width="1" height="424" fill="#e5a64a"/><rect x="376" y="0" width="1" height="424" fill="#e09e42"/><rect x="377" y="0" width="1" height="424" fill="#e9ab50"/><rect x="378" y="0" width="1" height="424" fill="#eaad54"/><rect x="379" y="0" width="1" height="424" fill="#e6a548"/><rect x="380" y="0" width="1" height="424" fill="#de9c40"/><rect x="381" y="0" width="1" height="424" fill="#e3a246"/><rect x="382" y="0" width="1" height="424" fill="#e6a548"/><rect x="383" y="0" width="1" height="424" fill="#e6a548"/><rect x="384" y="0" width="1" height="424" fill="#e9ab50"/><rect x="385" y="0" width="1" height="424" fill="#e3a246"/><rect x="386" y="0" width="1" height="424" fill="#e9ab50"/><rect x="387" y="0" width="1" height="424" fill="#e6a548"/><rect x="388" y="0" width="1" height="424" fill="#de9c40"/><rect x="389" y="0" width="1" height="424" fill="#e5a64a"/><rect x="390" y="0" width="1" height="424" fill="#e5a64a"/><rect x="391" y="0" width="1" height="424" fill="#e9ab50"/><rect x="392" y="0" width="1" height="424" fill="#e2a044"/><rect x="393" y="0" width="1" height="424" fill="#e09e42"/><rect x="394" y="0" width="1" height="424" fill="#e2a044"/><rect x="395" y="0" width="1" height="424" fill="#e09e42"/><rect x="396" y="0" width="1" height="424" fill="#de9c40"/><rect x="397" y="0" width="1" height="424" fill="#e9ab50"/><rect x="398" y="0" width="1" height="424" fill="#eaad54"/><rect x="399" y="0" width="1" height="424" fill="#e6a548"/><rect x="400" y="0" width="1" height="424" fill="#eaad54"/><rect x="401" y="0" width="1" height="424" fill="#eaad54"/><rect x="402" y="0" width="1" height="424" fill="#e3a246"/><rect x="403" y="0" width="1" height="424" fill="#e9ab50"/><rect x="404" y="0" width="1" height="424" fill="#e9ab50"/><rect x="405" y="0" width="1" height="424" fill="#e9ab50"/><rect x="406" y="0" width="1" height="424" fill="#e3a246"/><rect x="407" y="0" width="1" height="424" fill="#e9ab50"/><rect x="408" y="0" width="1" height="424" fill="#e5a64a"/><rect x="409" y="0" width="1" height="424" fill="#e3a246"/><rect x="410" y="0" width="1" height="424" fill="#e5a64a"/><rect x="411" y="0" width="1" height="424" fill="#e5a64a"/><rect x="412" y="0" width="1" height="424" fill="#e9ab50"/><rect x="413" y="0" width="1" height="424" fill="#e9ab50"/><rect x="414" y="0" width="1" height="424" fill="#e9ab50"/><rect x="415" y="0" width="1" height="424" fill="#e09e42"/><rect x="416" y="0" width="1" height="424" fill="#e3a246"/><rect x="417" y="0" width="1" height="424" fill="#e9ab50"/><rect x="418" y="0" width="1" height="424" fill="#e3a246"/><rect x="419" y="0" width="1" height="424" fill="#e09e42"/><rect x="420" y="0" width="1" height="424" fill="#de9c40"/><rect x="421" y="0" width="1" height="424" fill="#eaad54"/><rect x="422" y="0" width="1" height="424" fill="#e09e42"/><rect x="423" y="0" width="1" height="424" fill="#eaad54"/></g><clipPath id="cc"><rect x="114" y="48" width="22" height="22"/><rect x="290" y="48" width="22" height="22"/><rect x="334" y="48" width="22" height="22"/><rect x="356" y="48" width="22" height="22"/><rect x="70" y="70" width="22" height="22"/><rect x="378" y="92" width="22" height="22"/><rect x="356" y="114" width="22" height="22"/><rect x="356" y="136" width="22" height="22"/><rect x="312" y="158" width="22" height="22"/><rect x="180" y="224" width="22" height="22"/><rect x="114" y="246" width="22" height="22"/><rect x="158" y="246" width="22" height="22"/><rect x="202" y="246" width="22" height="22"/><rect x="246" y="246" width="22" height="22"/><rect x="48" y="268" width="22" height="22"/><rect x="180" y="268" width="22" height="22"/><rect x="48" y="290" width="22" height="22"/><rect x="70" y="334" width="22" height="22"/><rect x="246" y="356" width="22" height="22"/><rect x="268" y="356" width="22" height="22"/><rect x="180" y="378" width="22" height="22"/><rect x="202" y="378" width="22" height="22"/><rect x="290" y="378" width="22" height="22"/><rect x="312" y="378" width="22" height="22"/><rect x="356" y="378" width="22" height="22"/><rect x="334" y="70" width="22" height="22"/><rect x="356" y="92" width="22" height="22"/><rect x="334" y="114" width="22" height="22"/><rect x="334" y="136" width="22" height="22"/><rect x="356" y="158" width="22" height="22"/><rect x="378" y="158" width="22" height="22"/><rect x="224" y="180" width="22" height="22"/><rect x="334" y="180" width="22" height="22"/><rect x="114" y="202" width="22" height="22"/><rect x="158" y="202" width="22" height="22"/><rect x="70" y="224" width="22" height="22"/><rect x="158" y="224" width="22" height="22"/><rect x="70" y="268" width="22" height="22"/><rect x="246" y="312" width="22" height="22"/><rect x="290" y="312" width="22" height="22"/><rect x="202" y="334" width="22" height="22"/><rect x="312" y="334" width="22" height="22"/><rect x="356" y="334" width="22" height="22"/><rect x="114" y="356" width="22" height="22"/><rect x="180" y="356" width="22" height="22"/><rect x="312" y="356" width="22" height="22"/><rect x="158" y="378" width="22" height="22"/><rect x="334" y="378" width="22" height="22"/><rect x="334" y="400" width="22" height="22"/></clipPath><radialGradient id="gw" cx="0.4" cy="0.38" r="0.66" fx="0.32" fy="0.26"><stop offset="0" stop-color="#ffffff"/><stop offset="0.2" stop-color="#f6f6f6"/><stop offset="0.5" stop-color="#dcdcdc"/><stop offset="0.78" stop-color="#b2b2b2"/><stop offset="1" stop-color="#858585"/></radialGradient><filter id="bl" x="-20%" y="-20%" width="140%" height="140%"><feGaussianBlur stdDeviation="0.7"/></filter><radialGradient id="gb" cx="0.45" cy="0.42" r="0.62" fx="0.3" fy="0.24"><stop offset="0" stop-color="#6a6a6a"/><stop offset="0.22" stop-color="#2c2c2c"/><stop offset="0.55" stop-color="#121212"/><stop offset="1" stop-color="#020202"/></radialGradient></defs><use href="#wood"/><g shape-rendering="crispEdges"><rect x="14" y="14" width="1" height="397" fill="#1a0a08"/><rect x="14" y="14" width="397" height="1" fill="#1a0a08"/><rect x="36" y="14" width="1" height="397" fill="#1a0a08"/><rect x="14" y="36" width="397" height="1" fill="#1a0a08"/><rect x="58" y="14" width="1" height="397" fill="#1a0a08"/><rect x="14" y="58" width="397" height="1" fill="#1a0a08"/><rect x="80" y="14" width="1" height="397" fill="#1a0a08"/><rect x="14" y="80" width="397" height="1" fill="#1a0a08"/><rect x="102" y="14" width="1" height="397" fill="#1a0a08"/><rect x="14" y="102" width="397" height="1" fill="#1a0a08"/><rect x="124" y="14" width="1" height="397" fill="#1a0a08"/><rect x="14" y="124" width="397" height="1" fill="#1a0a08"/><rect x="146" y="14" width="1" height="397" fill="#1a0a08"/><rect x="14" y="146" width="397" height="1" fill="#1a0a08"/><rect x="168" y="14" width="1" height="397" fill="#1a0a08"/><rect x="14" y="168" width="397" height="1" fill="#1a0a08"/><rect x="190" y="14" width="1" height="397" fill="#1a0a08"/><rect x="14" y="190" width="397" height="1" fill="#1a0a08"/><rect x="212" y="14" width="1" height="397" fill="#1a0a08"/><rect x="14" y="212" width="397" height="1" fill="#1a0a08"/><rect x="234" y="14" width="1" height="397" fill="#1a0a08"/><rect x="14" y="234" width="397" height="1" fill="#1a0a08"/><rect x="256" y="14" width="1" height="397" fill="#1a0a08"/><rect x="14" y="256" width="397" height="1" fill="#1a0a08"/><rect x="278" y="14" width="1" height="397" fill="#1a0a08"/><rect x="14" y="278" width="397" height="1" fill="#1a0a08"/><rect x="300" y="14" width="1" height="397" fill="#1a0a08"/><rect x="14" y="300" width="397" height="1" fill="#1a0a08"/><rect x="322" y="14" width="1" height="397" fill="#1a0a08"/><rect x="14" y="322" width="397" height="1" fill="#1a0a08"/><rect x="344" y="14" width="1" height="397" fill="#1a0a08"/><rect x="14" y="344" width="397" height="1" fill="#1a0a08"/><rect x="366" y="14" width="1" height="397" fill="#1a0a08"/><rect x="14" y="366" width="397" height="1" fill="#1a0a08"/><rect x="388" y="14" width="1" height="397" fill="#1a0a08"/><rect x="14" y="388" width="397" height="1" fill="#1a0a08"/><rect x="410" y="14" width="1" height="397" fill="#1a0a08"/><rect x="14" y="410" width="397" height="1" fill="#1a0a08"/></g><circle cx="80.5" cy="80.5" r="2.6" fill="#1a0a08"/><circle cx="80.5" cy="212.5" r="2.6" fill="#1a0a08"/><circle cx="80.5" cy="344.5" r="2.6" fill="#1a0a08"/><circle cx="212.5" cy="80.5" r="2.6" fill="#1a0a08"/><circle cx="212.5" cy="212.5" r="2.6" fill="#1a0a08"/><circle cx="212.5" cy="344.5" r="2.6" fill="#1a0a08"/><circle cx="344.5" cy="80.5" r="2.6" fill="#1a0a08"/><circle cx="344.5" cy="212.5" r="2.6" fill="#1a0a08"/><circle cx="344.5" cy="344.5" r="2.6" fill="#1a0a08"/><use href="#wood" clip-path="url(#cc)"/><circle cx="125.05000000000001" cy="59.250000000000014" r="10.2" fill="#5a3a10" opacity="0.55" filter="url(#bl)"/><circle cx="124.05000000000001" cy="58.05000000000001" r="9.8" fill="url(#gw)"/><circle cx="301.05" cy="59.250000000000014" r="10.2" fill="#5a3a10" opacity="0.55" filter="url(#bl)"/><circle cx="300.05" cy="58.05000000000001" r="9.8" fill="url(#gw)"/><circle cx="345.05" cy="59.250000000000014" r="10.2" fill="#5a3a10" opacity="0.55" filter="url(#bl)"/><circle cx="344.05" cy="58.05000000000001" r="9.8" fill="url(#gw)"/><circle cx="367.05" cy="59.250000000000014" r="10.2" fill="#5a3a10" opacity="0.55" filter="url(#bl)"/><circle cx="366.05" cy="58.05000000000001" r="9.8" fill="url(#gw)"/><circle cx="81.05000000000001" cy="81.25000000000001" r="10.2" fill="#5a3a10" opacity="0.55" filter="url(#bl)"/><circle cx="80.05000000000001" cy="80.05000000000001" r="9.8" fill="url(#gw)"/><circle cx="389.05" cy="103.25000000000001" r="10.2" fill="#5a3a10" opacity="0.55" filter="url(#bl)"/><circle cx="388.05" cy="102.05000000000001" r="9.8" fill="url(#gw)"/><circle cx="367.05" cy="125.25000000000001" r="10.2" fill="#5a3a10" opacity="0.55" filter="url(#bl)"/><circle cx="366.05" cy="124.05000000000001" r="9.8" fill="url(#gw)"/><circle cx="367.05" cy="147.25" r="10.2" fill="#5a3a10" opacity="0.55" filter="url(#bl)"/><circle cx="366.05" cy="146.05" r="9.8" fill="url(#gw)"/><circle cx="323.05" cy="169.25" r="10.2" fill="#5a3a10" opacity="0.55" filter="url(#bl)"/><circle cx="322.05" cy="168.05" r="9.8" fill="url(#gw)"/><circle cx="191.05" cy="235.25" r="10.2" fill="#5a3a10" opacity="0.55" filter="url(#bl)"/><circle cx="190.05" cy="234.05" r="9.8" fill="url(#gw)"/><circle cx="125.05000000000001" cy="257.25" r="10.2" fill="#5a3a10" opacity="0.55" filter="url(#bl)"/><circle cx="124.05000000000001" cy="256.05" r="9.8" fill="url(#gw)"/><circle cx="169.05" cy="257.25" r="10.2" fill="#5a3a10" opacity="0.55" filter="url(#bl)"/><circle cx="168.05" cy="256.05" r="9.8" fill="url(#gw)"/><circle cx="213.05" cy="257.25" r="10.2" fill="#5a3a10" opacity="0.55" filter="url(#bl)"/><circle cx="212.05" cy="256.05" r="9.8" fill="url(#gw)"/><circle cx="257.05" cy="257.25" r="10.2" fill="#5a3a10" opacity="0.55" filter="url(#bl)"/><circle cx="256.05" cy="256.05" r="9.8" fill="url(#gw)"/><circle cx="59.05000000000001" cy="279.25" r="10.2" fill="#5a3a10" opacity="0.55" filter="url(#bl)"/><circle cx="58.05000000000001" cy="278.05" r="9.8" fill="url(#gw)"/><circle cx="191.05" cy="279.25" r="10.2" fill="#5a3a10" opacity="0.55" filter="url(#bl)"/><circle cx="190.05" cy="278.05" r="9.8" fill="url(#gw)"/><circle cx="59.05000000000001" cy="301.25" r="10.2" fill="#5a3a10" opacity="0.55" filter="url(#bl)"/><circle cx="58.05000000000001" cy="300.05" r="9.8" fill="url(#gw)"/><circle cx="81.05000000000001" cy="345.25" r="10.2" fill="#5a3a10" opacity="0.55" filter="url(#bl)"/><circle cx="80.05000000000001" cy="344.05" r="9.8" fill="url(#gw)"/><circle cx="257.05" cy="367.25" r="10.2" fill="#5a3a10" opacity="0.55" filter="url(#bl)"/><circle cx="256.05" cy="366.05" r="9.8" fill="url(#gw)"/><circle cx="279.05" cy="367.25" r="10.2" fill="#5a3a10" opacity="0.55" filter="url(#bl)"/><circle cx="278.05" cy="366.05" r="9.8" fill="url(#gw)"/><circle cx="191.05" cy="389.24999999999994" r="10.2" fill="#5a3a10" opacity="0.55" filter="url(#bl)"/><circle cx="190.05" cy="388.04999999999995" r="9.8" fill="url(#gw)"/><circle cx="213.05" cy="389.24999999999994" r="10.2" fill="#5a3a10" opacity="0.55" filter="url(#bl)"/><circle cx="212.05" cy="388.04999999999995" r="9.8" fill="url(#gw)"/><circle cx="301.05" cy="389.24999999999994" r="10.2" fill="#5a3a10" opacity="0.55" filter="url(#bl)"/><circle cx="300.05" cy="388.04999999999995" r="9.8" fill="url(#gw)"/><circle cx="323.05" cy="389.24999999999994" r="10.2" fill="#5a3a10" opacity="0.55" filter="url(#bl)"/><circle cx="322.05" cy="388.04999999999995" r="9.8" fill="url(#gw)"/><circle cx="367.05" cy="389.24999999999994" r="10.2" fill="#5a3a10" opacity="0.55" filter="url(#bl)"/><circle cx="366.05" cy="388.04999999999995" r="9.8" fill="url(#gw)"/><circle cx="345.05" cy="81.25000000000001" r="10.2" fill="#5a3a10" opacity="0.55" filter="url(#bl)"/><circle cx="344.05" cy="80.05000000000001" r="9.8" fill="url(#gb)"/><circle cx="367.05" cy="103.25000000000001" r="10.2" fill="#5a3a10" opacity="0.55" filter="url(#bl)"/><circle cx="366.05" cy="102.05000000000001" r="9.8" fill="url(#gb)"/><circle cx="345.05" cy="125.25000000000001" r="10.2" fill="#5a3a10" opacity="0.55" filter="url(#bl)"/><circle cx="344.05" cy="124.05000000000001" r="9.8" fill="url(#gb)"/><circle cx="345.05" cy="147.25" r="10.2" fill="#5a3a10" opacity="0.55" filter="url(#bl)"/><circle cx="344.05" cy="146.05" r="9.8" fill="url(#gb)"/><circle cx="367.05" cy="169.25" r="10.2" fill="#5a3a10" opacity="0.55" filter="url(#bl)"/><circle cx="366.05" cy="168.05" r="9.8" fill="url(#gb)"/><circle cx="389.05" cy="169.25" r="10.2" fill="#5a3a10" opacity="0.55" filter="url(#bl)"/><circle cx="388.05" cy="168.05" r="9.8" fill="url(#gb)"/><circle cx="235.05" cy="191.25" r="10.2" fill="#5a3a10" opacity="0.55" filter="url(#bl)"/><circle cx="234.05" cy="190.05" r="9.8" fill="url(#gb)"/><circle cx="345.05" cy="191.25" r="10.2" fill="#5a3a10" opacity="0.55" filter="url(#bl)"/><circle cx="344.05" cy="190.05" r="9.8" fill="url(#gb)"/><circle cx="125.05000000000001" cy="213.25" r="10.2" fill="#5a3a10" opacity="0.55" filter="url(#bl)"/><circle cx="124.05000000000001" cy="212.05" r="9.8" fill="url(#gb)"/><circle cx="169.05" cy="213.25" r="10.2" fill="#5a3a10" opacity="0.55" filter="url(#bl)"/><circle cx="168.05" cy="212.05" r="9.8" fill="url(#gb)"/><circle cx="81.05000000000001" cy="235.25" r="10.2" fill="#5a3a10" opacity="0.55" filter="url(#bl)"/><circle cx="80.05000000000001" cy="234.05" r="9.8" fill="url(#gb)"/><circle cx="169.05" cy="235.25" r="10.2" fill="#5a3a10" opacity="0.55" filter="url(#bl)"/><circle cx="168.05" cy="234.05" r="9.8" fill="url(#gb)"/><circle cx="81.05000000000001" cy="279.25" r="10.2" fill="#5a3a10" opacity="0.55" filter="url(#bl)"/><circle cx="80.05000000000001" cy="278.05" r="9.8" fill="url(#gb)"/><circle cx="257.05" cy="323.25" r="10.2" fill="#5a3a10" opacity="0.55" filter="url(#bl)"/><circle cx="256.05" cy="322.05" r="9.8" fill="url(#gb)"/><circle cx="301.05" cy="323.25" r="10.2" fill="#5a3a10" opacity="0.55" filter="url(#bl)"/><circle cx="300.05" cy="322.05" r="9.8" fill="url(#gb)"/><circle cx="213.05" cy="345.25" r="10.2" fill="#5a3a10" opacity="0.55" filter="url(#bl)"/><circle cx="212.05" cy="344.05" r="9.8" fill="url(#gb)"/><circle cx="323.05" cy="345.25" r="10.2" fill="#5a3a10" opacity="0.55" filter="url(#bl)"/><circle cx="322.05" cy="344.05" r="9.8" fill="url(#gb)"/><circle cx="367.05" cy="345.25" r="10.2" fill="#5a3a10" opacity="0.55" filter="url(#bl)"/><circle cx="366.05" cy="344.05" r="9.8" fill="url(#gb)"/><circle cx="125.05000000000001" cy="367.25" r="10.2" fill="#5a3a10" opacity="0.55" filter="url(#bl)"/><circle cx="124.05000000000001" cy="366.05" r="9.8" fill="url(#gb)"/><circle cx="191.05" cy="367.25" r="10.2" fill="#5a3a10" opacity="0.55" filter="url(#bl)"/><circle cx="190.05" cy="366.05" r="9.8" fill="url(#gb)"/><circle cx="323.05" cy="367.25" r="10.2" fill="#5a3a10" opacity="0.55" filter="url(#bl)"/><circle cx="322.05" cy="366.05" r="9.8" fill="url(#gb)"/><circle cx="169.05" cy="389.24999999999994" r="10.2" fill="#5a3a10" opacity="0.55" filter="url(#bl)"/><circle cx="168.05" cy="388.04999999999995" r="9.8" fill="url(#gb)"/><circle cx="345.05" cy="389.24999999999994" r="10.2" fill="#5a3a10" opacity="0.55" filter="url(#bl)"/><circle cx="344.05" cy="388.04999999999995" r="9.8" fill="url(#gb)"/><circle cx="345.05" cy="411.24999999999994" r="10.2" fill="#5a3a10" opacity="0.55" filter="url(#bl)"/><circle cx="344.05" cy="410.04999999999995" r="9.8" fill="url(#gb)"/></svg>
<div class="t" style="left:80.5px;width:20px;text-align:center;top:114px;font-size:11px">A</div>
<div class="t" style="left:80.5px;width:20px;text-align:center;top:557px;font-size:11px">A</div>
<div class="t" style="left:102.5px;width:20px;text-align:center;top:114px;font-size:11px">B</div>
<div class="t" style="left:102.5px;width:20px;text-align:center;top:557px;font-size:11px">B</div>
<div class="t" style="left:124.5px;width:20px;text-align:center;top:114px;font-size:11px">C</div>
<div class="t" style="left:124.5px;width:20px;text-align:center;top:557px;font-size:11px">C</div>
<div class="t" style="left:146.5px;width:20px;text-align:center;top:114px;font-size:11px">D</div>
<div class="t" style="left:146.5px;width:20px;text-align:center;top:557px;font-size:11px">D</div>
<div class="t" style="left:168.5px;width:20px;text-align:center;top:114px;font-size:11px">E</div>
<div class="t" style="left:168.5px;width:20px;text-align:center;top:557px;font-size:11px">E</div>
<div class="t" style="left:190.5px;width:20px;text-align:center;top:114px;font-size:11px">F</div>
<div class="t" style="left:190.5px;width:20px;text-align:center;top:557px;font-size:11px">F</div>
<div class="t" style="left:212.5px;width:20px;text-align:center;top:114px;font-size:11px">G</div>
<div class="t" style="left:212.5px;width:20px;text-align:center;top:557px;font-size:11px">G</div>
<div class="t" style="left:234.5px;width:20px;text-align:center;top:114px;font-size:11px">H</div>
<div class="t" style="left:234.5px;width:20px;text-align:center;top:557px;font-size:11px">H</div>
<div class="t" style="left:256.5px;width:20px;text-align:center;top:114px;font-size:11px">J</div>
<div class="t" style="left:256.5px;width:20px;text-align:center;top:557px;font-size:11px">J</div>
<div class="t" style="left:278.5px;width:20px;text-align:center;top:114px;font-size:11px">K</div>
<div class="t" style="left:278.5px;width:20px;text-align:center;top:557px;font-size:11px">K</div>
<div class="t" style="left:300.5px;width:20px;text-align:center;top:114px;font-size:11px">L</div>
<div class="t" style="left:300.5px;width:20px;text-align:center;top:557px;font-size:11px">L</div>
<div class="t" style="left:322.5px;width:20px;text-align:center;top:114px;font-size:11px">M</div>
<div class="t" style="left:322.5px;width:20px;text-align:center;top:557px;font-size:11px">M</div>
<div class="t" style="left:344.5px;width:20px;text-align:center;top:114px;font-size:11px">N</div>
<div class="t" style="left:344.5px;width:20px;text-align:center;top:557px;font-size:11px">N</div>
<div class="t" style="left:366.5px;width:20px;text-align:center;top:114px;font-size:11px">O</div>
<div class="t" style="left:366.5px;width:20px;text-align:center;top:557px;font-size:11px">O</div>
<div class="t" style="left:388.5px;width:20px;text-align:center;top:114px;font-size:11px">P</div>
<div class="t" style="left:388.5px;width:20px;text-align:center;top:557px;font-size:11px">P</div>
<div class="t" style="left:410.5px;width:20px;text-align:center;top:114px;font-size:11px">Q</div>
<div class="t" style="left:410.5px;width:20px;text-align:center;top:557px;font-size:11px">Q</div>
<div class="t" style="left:432.5px;width:20px;text-align:center;top:114px;font-size:11px">R</div>
<div class="t" style="left:432.5px;width:20px;text-align:center;top:557px;font-size:11px">R</div>
<div class="t" style="left:454.5px;width:20px;text-align:center;top:114px;font-size:11px">S</div>
<div class="t" style="left:454.5px;width:20px;text-align:center;top:557px;font-size:11px">S</div>
<div class="t" style="left:476.5px;width:20px;text-align:center;top:114px;font-size:11px">T</div>
<div class="t" style="left:476.5px;width:20px;text-align:center;top:557px;font-size:11px">T</div>
<div class="t" style="left:59px;width:20px;text-align:center;top:136px;font-size:11px;transform:scaleX(0.93)">19</div>
<div class="t" style="left:502px;width:20px;text-align:center;top:136px;font-size:11px;transform:scaleX(0.93)">19</div>
<div class="t" style="left:59px;width:20px;text-align:center;top:158px;font-size:11px;transform:scaleX(0.93)">18</div>
<div class="t" style="left:502px;width:20px;text-align:center;top:158px;font-size:11px;transform:scaleX(0.93)">18</div>
<div class="t" style="left:59px;width:20px;text-align:center;top:180px;font-size:11px;transform:scaleX(0.93)">17</div>
<div class="t" style="left:502px;width:20px;text-align:center;top:180px;font-size:11px;transform:scaleX(0.93)">17</div>
<div class="t" style="left:59px;width:20px;text-align:center;top:202px;font-size:11px;transform:scaleX(0.93)">16</div>
<div class="t" style="left:502px;width:20px;text-align:center;top:202px;font-size:11px;transform:scaleX(0.93)">16</div>
<div class="t" style="left:59px;width:20px;text-align:center;top:224px;font-size:11px;transform:scaleX(0.93)">15</div>
<div class="t" style="left:502px;width:20px;text-align:center;top:224px;font-size:11px;transform:scaleX(0.93)">15</div>
<div class="t" style="left:59px;width:20px;text-align:center;top:246px;font-size:11px;transform:scaleX(0.93)">14</div>
<div class="t" style="left:502px;width:20px;text-align:center;top:246px;font-size:11px;transform:scaleX(0.93)">14</div>
<div class="t" style="left:59px;width:20px;text-align:center;top:268px;font-size:11px;transform:scaleX(0.93)">13</div>
<div class="t" style="left:502px;width:20px;text-align:center;top:268px;font-size:11px;transform:scaleX(0.93)">13</div>
<div class="t" style="left:59px;width:20px;text-align:center;top:290px;font-size:11px;transform:scaleX(0.93)">12</div>
<div class="t" style="left:502px;width:20px;text-align:center;top:290px;font-size:11px;transform:scaleX(0.93)">12</div>
<div class="t" style="left:59px;width:20px;text-align:center;top:312px;font-size:11px;transform:scaleX(0.93)">11</div>
<div class="t" style="left:502px;width:20px;text-align:center;top:312px;font-size:11px;transform:scaleX(0.93)">11</div>
<div class="t" style="left:59px;width:20px;text-align:center;top:334px;font-size:11px;transform:scaleX(0.93)">10</div>
<div class="t" style="left:502px;width:20px;text-align:center;top:334px;font-size:11px;transform:scaleX(0.93)">10</div>
<div class="t" style="left:59px;width:20px;text-align:center;top:356px;font-size:11px;transform:scaleX(0.93)">9</div>
<div class="t" style="left:502px;width:20px;text-align:center;top:356px;font-size:11px;transform:scaleX(0.93)">9</div>
<div class="t" style="left:59px;width:20px;text-align:center;top:378px;font-size:11px;transform:scaleX(0.93)">8</div>
<div class="t" style="left:502px;width:20px;text-align:center;top:378px;font-size:11px;transform:scaleX(0.93)">8</div>
<div class="t" style="left:59px;width:20px;text-align:center;top:400px;font-size:11px;transform:scaleX(0.93)">7</div>
<div class="t" style="left:502px;width:20px;text-align:center;top:400px;font-size:11px;transform:scaleX(0.93)">7</div>
<div class="t" style="left:59px;width:20px;text-align:center;top:422px;font-size:11px;transform:scaleX(0.93)">6</div>
<div class="t" style="left:502px;width:20px;text-align:center;top:422px;font-size:11px;transform:scaleX(0.93)">6</div>
<div class="t" style="left:59px;width:20px;text-align:center;top:444px;font-size:11px;transform:scaleX(0.93)">5</div>
<div class="t" style="left:502px;width:20px;text-align:center;top:444px;font-size:11px;transform:scaleX(0.93)">5</div>
<div class="t" style="left:59px;width:20px;text-align:center;top:466px;font-size:11px;transform:scaleX(0.93)">4</div>
<div class="t" style="left:502px;width:20px;text-align:center;top:466px;font-size:11px;transform:scaleX(0.93)">4</div>
<div class="t" style="left:59px;width:20px;text-align:center;top:488px;font-size:11px;transform:scaleX(0.93)">3</div>
<div class="t" style="left:502px;width:20px;text-align:center;top:488px;font-size:11px;transform:scaleX(0.93)">3</div>
<div class="t" style="left:59px;width:20px;text-align:center;top:510px;font-size:11px;transform:scaleX(0.93)">2</div>
<div class="t" style="left:502px;width:20px;text-align:center;top:510px;font-size:11px;transform:scaleX(0.93)">2</div>
<div class="t" style="left:59px;width:20px;text-align:center;top:532px;font-size:11px;transform:scaleX(0.93)">1</div>
<div class="t" style="left:502px;width:20px;text-align:center;top:532px;font-size:11px;transform:scaleX(0.93)">1</div>
<div class="t" style="left:237px;width:16px;text-align:center;top:356.5px;font-size:11px;color:#fff">3</div>
<div class="t" style="left:259px;width:16px;text-align:center;top:356.5px;font-size:11px;color:#000">2</div>
<div class="t" style="left:259px;width:16px;text-align:center;top:400.5px;font-size:11px;color:#e02020">4</div>
<div class="a" style="left:1px;top:573px;width:784px;height:19px;background:#f0f0f0"></div>
<div class="a" style="left:1px;top:573px;width:487px;height:19px;border:1px solid #a0a0a0;border-bottom:none"></div>
<div class="a" style="left:489px;top:573px;width:131px;height:19px;border:1px solid #a0a0a0;border-bottom:none"></div>
<div class="a" style="left:622px;top:573px;width:120px;height:19px;border:1px solid #a0a0a0;border-bottom:none"></div>
<div class="a" style="left:744px;top:573px;width:41px;height:19px;border:1px solid #a0a0a0;border-bottom:none"></div>
<div class="t" style="left:6px;top:578px;font-size:12px;transform:scaleX(0.946);transform-origin:0 0">For Help, press F1</div>
<div class="t" style="left:494px;top:578px;font-size:12px;transform:scaleX(0.968);transform-origin:0 0">Dead: Black 1 White 0</div>
<div class="t" style="left:627px;top:578px;font-size:12px;transform:scaleX(0.95);transform-origin:0 0">Last Move: 4 (J7)</div>
<div class="a" style="left:745px;top:574px;width:38px;height:18px;overflow:hidden"><div class="t" style="left:4px;top:4px;font-size:12px">Next:B</div></div>
<svg style="left:772px;top:580px" width="12" height="11" viewBox="0 0 12 11" shape-rendering="crispEdges"><rect x="3" y="8" width="2" height="2" fill="#b8b8b8"/><rect x="6" y="8" width="2" height="2" fill="#b8b8b8"/><rect x="9" y="8" width="2" height="2" fill="#b8b8b8"/></svg>
<div class="a" style="left:1px;top:31px;width:1px;height:80px;background:#e4f2fb;opacity:.8"></div>
<div class="a" style="left:0;top:111px;width:2px;height:482px;background:#6898cc"></div>
</body></html>
